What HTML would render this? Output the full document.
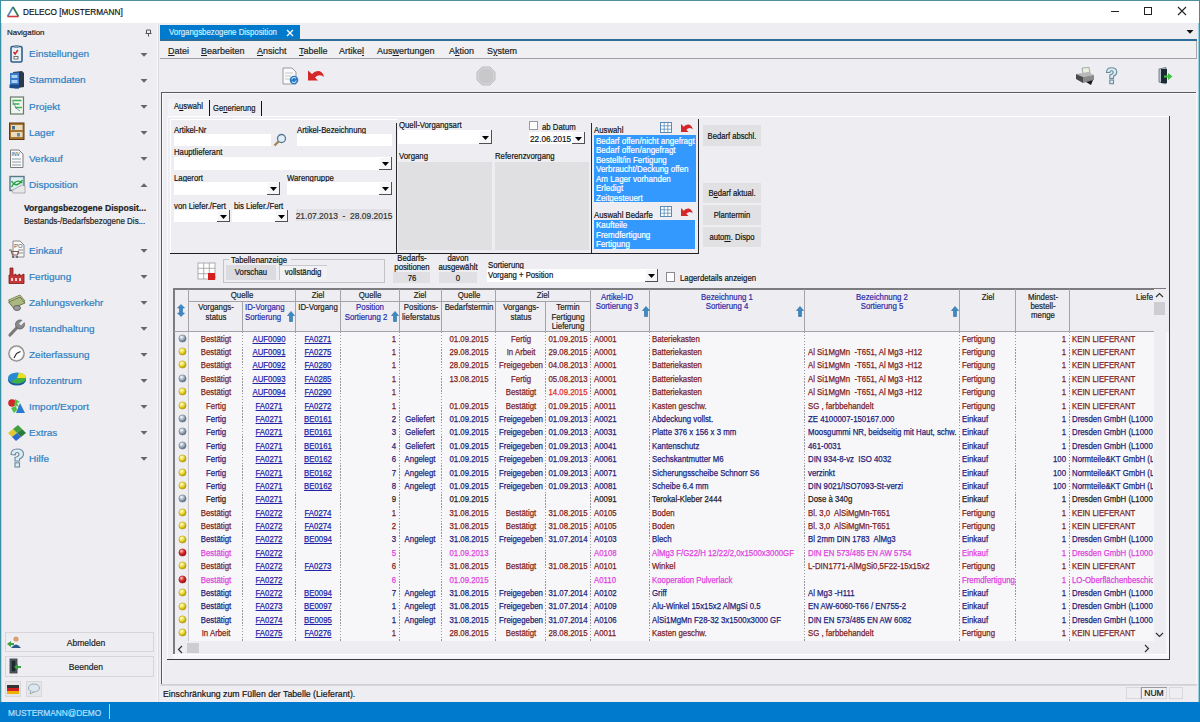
<!DOCTYPE html>
<html><head><meta charset="utf-8"><title>DELECO</title>
<style>
html,body{margin:0;padding:0;}
body{width:1200px;height:722px;overflow:hidden;background:#eeeef2;position:relative;font-family:"Liberation Sans", sans-serif;}
.a{position:absolute;}
.t{position:absolute;white-space:pre;font-family:"Liberation Sans", sans-serif;-webkit-text-stroke:0.2px currentColor;}
u{text-decoration:underline;}
</style></head><body>
<svg width="0" height="0" style="position:absolute"><defs>
<radialGradient id="gg" cx="35%" cy="30%" r="70%"><stop offset="0" stop-color="#ffffff"/><stop offset="0.5" stop-color="#a8b8c8"/><stop offset="1" stop-color="#58687a"/></radialGradient>
<radialGradient id="gy" cx="35%" cy="30%" r="70%"><stop offset="0" stop-color="#ffffe0"/><stop offset="0.5" stop-color="#f0e040"/><stop offset="1" stop-color="#b09800"/></radialGradient>
<radialGradient id="gr" cx="35%" cy="30%" r="70%"><stop offset="0" stop-color="#ffd0d0"/><stop offset="0.5" stop-color="#e03030"/><stop offset="1" stop-color="#901010"/></radialGradient>
</defs></svg>
<div class="a" style="left:0px;top:0px;width:1200px;height:23px;background:#ffffff"></div>
<div class="a" style="left:0px;top:0px;width:1200px;height:1px;background:#4f8e9e"></div>
<div class="a" style="left:0px;top:0px;width:1px;height:722px;background:#3a90a6"></div>
<div class="a" style="left:1199px;top:0px;width:1px;height:722px;background:#3a90a6"></div>
<div class="a" style="left:1198px;top:23px;width:1px;height:679px;background:#9ad0e0"></div>
<div class="a" style="left:1px;top:23px;width:1px;height:679px;background:#a8dcea"></div>
<svg class="a" style="left:6px;top:6px" width="14" height="12" viewBox="0 0 14 12"><path d="M7 1 L1.5 10.5" stroke="#4a8ab8" stroke-width="1.6" fill="none"/><path d="M7 1 L12.5 10.5" stroke="#2a7a4a" stroke-width="1.6" fill="none"/><path d="M1.5 10.5 L12.5 10.5" stroke="#d03a3a" stroke-width="1.6" fill="none"/></svg>
<div class="t" style="top:7.20px;font-size:9.8px;line-height:9.8px;color:#111;left:23px;transform:scaleX(0.84);transform-origin:left 50%;">DELECO [MUSTERMANN]</div>
<div class="a" style="left:1111px;top:11px;width:8px;height:1px;background:#222"></div>
<div class="a" style="left:1144px;top:7px;width:8px;height:8px;border:1px solid #222;box-sizing:border-box;"></div>
<svg class="a" style="left:1177px;top:6px" width="10" height="10" viewBox="0 0 10 10"><path d="M1 1 L9 9 M9 1 L1 9" stroke="#222" stroke-width="1.1"/></svg>
<div class="t" style="top:29.14px;font-size:8.1px;line-height:8.1px;color:#222;left:7px;transform:scaleX(0.98);transform-origin:left 50%;">Navigation</div>
<svg class="a" style="left:145px;top:29px" width="7" height="8" viewBox="0 0 7 8"><path d="M1.5 1h4v3.5h-4z M0.5 4.5h6 M3.5 4.5v3" stroke="#555" stroke-width="1" fill="none"/></svg>
<div class="a" style="left:157px;top:23px;width:1px;height:679px;background:#f8f8fa"></div>
<div class="a" style="left:158px;top:23px;width:1px;height:679px;background:#dcdce0"></div>
<svg class="a" style="left:7px;top:44px" width="20" height="20" viewBox="0 0 20 20"><rect x="4" y="2.5" width="11" height="15.5" rx="1.5" fill="#e8f0f6" stroke="#2c5f88" stroke-width="1.6"/><rect x="7" y="1" width="5" height="3" rx="1" fill="#7a98b0"/><path d="M6.5 8 l1.6 2 l2.8-4" stroke="#d02020" stroke-width="1.4" fill="none"/><rect x="7" y="12.5" width="4" height="2.5" fill="#fff" stroke="#555" stroke-width="0.8"/></svg>
<div class="t" style="top:49.40px;font-size:9.8px;line-height:9.8px;color:#2f80c2;left:29.3px;transform:scaleX(1.02);transform-origin:left 50%;">Einstellungen</div>
<svg class="a" style="left:140px;top:52.7px" width="8" height="4" viewBox="0 0 8 4"><path d="M0.5 0h7L4 3.8z" fill="#666"/></svg>
<svg class="a" style="left:7px;top:70px" width="20" height="20" viewBox="0 0 20 20"><path d="M6 2 L15 1 L17 3 V17 L8 18.5z" fill="#2a3a4a"/><path d="M3 3 L12 2.5 V18.5 L3 18z" fill="#3a7ac8"/><rect x="4.5" y="5" width="6" height="3" fill="#a8d0f0"/><rect x="4.5" y="10" width="6" height="3" fill="#a8d0f0"/><path d="M2.5 14.5 L12 14.5 L12 18.5 L2.5 18z" fill="#1a4a88"/></svg>
<div class="t" style="top:75.48px;font-size:9.8px;line-height:9.8px;color:#2f80c2;left:29.3px;transform:scaleX(1.02);transform-origin:left 50%;">Stammdaten</div>
<svg class="a" style="left:140px;top:78.78px" width="8" height="4" viewBox="0 0 8 4"><path d="M0.5 0h7L4 3.8z" fill="#666"/></svg>
<svg class="a" style="left:7px;top:96px" width="20" height="20" viewBox="0 0 20 20"><rect x="3.5" y="1" width="13" height="17" fill="#f0f6f0" stroke="#6a7a6a" stroke-width="1.2"/><path d="M5.5 4.5h9 M5.5 8h7 M8 11.5h7" stroke="#40b050" stroke-width="1.6"/><path d="M5.5 5 L9 12 L13 15" stroke="#5a7a9a" stroke-width="0.8" fill="none"/></svg>
<div class="t" style="top:101.56px;font-size:9.8px;line-height:9.8px;color:#2f80c2;left:29.3px;transform:scaleX(1.02);transform-origin:left 50%;">Projekt</div>
<svg class="a" style="left:140px;top:104.86px" width="8" height="4" viewBox="0 0 8 4"><path d="M0.5 0h7L4 3.8z" fill="#666"/></svg>
<svg class="a" style="left:7px;top:122px" width="20" height="20" viewBox="0 0 20 20"><rect x="2.5" y="1" width="14.5" height="16.5" fill="#a8742e" stroke="#5a3a10" stroke-width="1"/><rect x="4" y="3" width="11.5" height="5" fill="#e8dcc0"/><rect x="4" y="10" width="11.5" height="5" fill="#e8dcc0"/><rect x="5" y="4" width="3" height="3.5" fill="#4a6a8a"/><rect x="10" y="11" width="3" height="3.5" fill="#6a8aaa"/></svg>
<div class="t" style="top:127.64px;font-size:9.8px;line-height:9.8px;color:#2f80c2;left:29.3px;transform:scaleX(1.02);transform-origin:left 50%;">Lager</div>
<svg class="a" style="left:140px;top:130.94px" width="8" height="4" viewBox="0 0 8 4"><path d="M0.5 0h7L4 3.8z" fill="#666"/></svg>
<svg class="a" style="left:7px;top:149px" width="20" height="20" viewBox="0 0 20 20"><path d="M3.5 1 H12 L16 5 V18.5 H3.5z" fill="#fafafa" stroke="#7a7a7a" stroke-width="1"/><text x="4.5" y="7" font-size="5" font-family="Liberation Sans" fill="#333">INV</text><path d="M5 10h9 M5 13h9 M5 16h9" stroke="#8aa0a8" stroke-width="1.2"/></svg>
<div class="t" style="top:153.72px;font-size:9.8px;line-height:9.8px;color:#2f80c2;left:29.3px;transform:scaleX(1.02);transform-origin:left 50%;">Verkauf</div>
<svg class="a" style="left:140px;top:157.01999999999998px" width="8" height="4" viewBox="0 0 8 4"><path d="M0.5 0h7L4 3.8z" fill="#666"/></svg>
<svg class="a" style="left:7px;top:175px" width="20" height="20" viewBox="0 0 20 20"><rect x="3" y="1.5" width="14" height="14" fill="#d8eef2" stroke="#5a7a88" stroke-width="1.4"/><path d="M4.5 12 Q9 3 15.5 8 M4.5 6 Q9 14 15.5 5" stroke="#2aa03a" stroke-width="1.3" fill="none"/><path d="M15 10 L18 11 V18 L6 18 L5 15.5z" fill="#e8e8e8" stroke="#888" stroke-width="0.6"/></svg>
<div class="t" style="top:179.80px;font-size:9.8px;line-height:9.8px;color:#2f80c2;left:29.3px;transform:scaleX(1.02);transform-origin:left 50%;">Disposition</div>
<svg class="a" style="left:140px;top:183.09999999999997px" width="8" height="4" viewBox="0 0 8 4"><path d="M0.5 4h7L4 0.2z" fill="#666"/></svg>
<svg class="a" style="left:7px;top:240px" width="20" height="20" viewBox="0 0 20 20"><path d="M6 1 H13 L17 5 V17 H6z" fill="#f8f8f8" stroke="#8a8a8a" stroke-width="1"/><text x="7" y="8" font-size="6" font-family="Liberation Sans" fill="#555">PO</text><path d="M11 10h5 M11 13h5" stroke="#8a8a8a" stroke-width="1"/><path d="M2 10 h2 l1.5 5 h5 l1-3.5 h-6.5" stroke="#7a5a50" stroke-width="1.2" fill="none"/><circle cx="6" cy="17" r="1" fill="#555"/><circle cx="10" cy="17" r="1" fill="#555"/></svg>
<div class="t" style="top:245.50px;font-size:9.8px;line-height:9.8px;color:#2f80c2;left:29.3px;transform:scaleX(1.02);transform-origin:left 50%;">Einkauf</div>
<svg class="a" style="left:140px;top:248.8px" width="8" height="4" viewBox="0 0 8 4"><path d="M0.5 0h7L4 3.8z" fill="#666"/></svg>
<svg class="a" style="left:7px;top:266px" width="20" height="20" viewBox="0 0 20 20"><path d="M2 9 L2 17.5 L17 17.5 L17 8 L13 10 L13 8 L9 10 L9 8 L6 9.5 L6 2 L3 2 L3 9z" fill="#c83838" stroke="#7a1818" stroke-width="0.8"/><rect x="4" y="12" width="2" height="3" fill="#f8d0d0"/><rect x="8" y="12" width="2" height="3" fill="#f8d0d0"/><rect x="12" y="12" width="2" height="3" fill="#f8d0d0"/></svg>
<div class="t" style="top:271.50px;font-size:9.8px;line-height:9.8px;color:#2f80c2;left:29.3px;transform:scaleX(1.02);transform-origin:left 50%;">Fertigung</div>
<svg class="a" style="left:140px;top:274.8px" width="8" height="4" viewBox="0 0 8 4"><path d="M0.5 0h7L4 3.8z" fill="#666"/></svg>
<svg class="a" style="left:7px;top:292px" width="20" height="20" viewBox="0 0 20 20"><path d="M1.5 8 L13 3 L18 9 L6.5 14z" fill="#c8d0a0" stroke="#6a7040" stroke-width="0.8"/><path d="M1.5 10 L13 5 L18 11 L6.5 16z" fill="#a8b880" stroke="#5a6030" stroke-width="0.8"/><ellipse cx="10" cy="16" rx="3.5" ry="2.5" fill="#9a9a9a" stroke="#555" stroke-width="0.8"/></svg>
<div class="t" style="top:297.50px;font-size:9.8px;line-height:9.8px;color:#2f80c2;left:29.3px;transform:scaleX(1.02);transform-origin:left 50%;">Zahlungsverkehr</div>
<svg class="a" style="left:140px;top:300.8px" width="8" height="4" viewBox="0 0 8 4"><path d="M0.5 0h7L4 3.8z" fill="#666"/></svg>
<svg class="a" style="left:7px;top:318px" width="20" height="20" viewBox="0 0 20 20"><path d="M3 17 L10.5 9" stroke="#7a7a7a" stroke-width="3.2" stroke-linecap="round"/><circle cx="13" cy="6.5" r="4.5" fill="#8a8a8a" stroke="#5a5a5a" stroke-width="0.8"/><path d="M13 6.5 L17 2.5" stroke="#eeeef2" stroke-width="2.5"/></svg>
<div class="t" style="top:323.50px;font-size:9.8px;line-height:9.8px;color:#2f80c2;left:29.3px;transform:scaleX(1.02);transform-origin:left 50%;">Instandhaltung</div>
<svg class="a" style="left:140px;top:326.8px" width="8" height="4" viewBox="0 0 8 4"><path d="M0.5 0h7L4 3.8z" fill="#666"/></svg>
<svg class="a" style="left:7px;top:344px" width="20" height="20" viewBox="0 0 20 20"><circle cx="9.5" cy="9.5" r="8.3" fill="#8a8a8a"/><circle cx="9.5" cy="9.5" r="6.8" fill="#ffffff" stroke="#c8c8c8" stroke-width="0.6"/><path d="M9.5 9.5 L13.5 7.5 M9.5 9.5 L7 14" stroke="#222" stroke-width="1.1"/></svg>
<div class="t" style="top:349.50px;font-size:9.8px;line-height:9.8px;color:#2f80c2;left:29.3px;transform:scaleX(1.02);transform-origin:left 50%;">Zeiterfassung</div>
<svg class="a" style="left:140px;top:352.8px" width="8" height="4" viewBox="0 0 8 4"><path d="M0.5 0h7L4 3.8z" fill="#666"/></svg>
<svg class="a" style="left:7px;top:370px" width="20" height="20" viewBox="0 0 20 20"><ellipse cx="10" cy="10" rx="9" ry="5.5" fill="#1a5a98"/><ellipse cx="10" cy="8" rx="9" ry="5.5" fill="#2a8ad0"/><path d="M10 8 L19 8 A9 5.5 0 0 0 12 2.6z" fill="#e8e020"/><path d="M10 8 L19 8 A9 5.5 0 0 1 4 12z" fill="#40b040"/></svg>
<div class="t" style="top:375.50px;font-size:9.8px;line-height:9.8px;color:#2f80c2;left:29.3px;transform:scaleX(1.02);transform-origin:left 50%;">Infozentrum</div>
<svg class="a" style="left:140px;top:378.8px" width="8" height="4" viewBox="0 0 8 4"><path d="M0.5 0h7L4 3.8z" fill="#666"/></svg>
<svg class="a" style="left:7px;top:396px" width="20" height="20" viewBox="0 0 20 20"><circle cx="5" cy="7" r="3.8" fill="#d02828"/><path d="M8 3 L13 6 L10 7 L12 11 L7 9 L8 6z" fill="#50c040"/><path d="M4 12 L9 10 L10 14 L7 17z" fill="#50c040"/><path d="M13 7 L18 17 L9 17z" fill="#2a7ad0"/></svg>
<div class="t" style="top:401.50px;font-size:9.8px;line-height:9.8px;color:#2f80c2;left:29.3px;transform:scaleX(1.02);transform-origin:left 50%;">Import/Export</div>
<svg class="a" style="left:140px;top:404.8px" width="8" height="4" viewBox="0 0 8 4"><path d="M0.5 0h7L4 3.8z" fill="#666"/></svg>
<svg class="a" style="left:7px;top:422px" width="20" height="20" viewBox="0 0 20 20"><path d="M1 11 L6 7 L10 11 L5 15z" fill="#e0c830"/><path d="M6 7 L11 3 L15 7 L10 11z" fill="#40a040"/><path d="M10 11 L15 7 L19 11 L14 15z" fill="#2a7a3a"/><path d="M5 15 L10 11 L14 15 L9 19z" fill="#2a6ac8"/></svg>
<div class="t" style="top:427.50px;font-size:9.8px;line-height:9.8px;color:#2f80c2;left:29.3px;transform:scaleX(1.02);transform-origin:left 50%;">Extras</div>
<svg class="a" style="left:140px;top:430.8px" width="8" height="4" viewBox="0 0 8 4"><path d="M0.5 0h7L4 3.8z" fill="#666"/></svg>
<svg class="a" style="left:7px;top:448px" width="20" height="20" viewBox="0 0 20 20"><path d="M4 6.5 Q4 1 10 1 Q16.5 1 16.5 6 Q16.5 9.2 12.5 11 L12.5 13 L8 13 L8 9.5 Q12 8.3 12 6.2 Q12 4.5 10 4.5 Q8.3 4.5 8.3 6.8z" fill="#dcecf4" stroke="#6a8a9c" stroke-width="1.1"/><rect x="8" y="14.8" width="4.5" height="4.2" fill="#dcecf4" stroke="#6a8a9c" stroke-width="1.1"/></svg>
<div class="t" style="top:453.50px;font-size:9.8px;line-height:9.8px;color:#2f80c2;left:29.3px;transform:scaleX(1.02);transform-origin:left 50%;">Hilfe</div>
<svg class="a" style="left:140px;top:456.8px" width="8" height="4" viewBox="0 0 8 4"><path d="M0.5 0h7L4 3.8z" fill="#666"/></svg>
<div class="t" style="top:203.51px;font-size:9.2px;line-height:9.2px;color:#222;font-weight:bold;left:24px;transform:scaleX(0.935);transform-origin:left 50%;">Vorgangsbezogene Disposit...</div>
<div class="t" style="top:216.61px;font-size:9.2px;line-height:9.2px;color:#222;left:24px;transform:scaleX(0.87);transform-origin:left 50%;">Bestands-/Bedarfsbezogene Dis...</div>
<div class="a" style="left:5px;top:632px;width:149px;height:20px;background:#eeeef2;border:1px solid #d6d6da;box-sizing:border-box;"></div>
<div class="a" style="left:5px;top:656px;width:149px;height:21px;background:#eeeef2;border:1px solid #d6d6da;box-sizing:border-box;"></div>
<svg class="a" style="left:7px;top:635px" width="14" height="14" viewBox="0 0 14 14"><circle cx="9" cy="4" r="2.6" fill="#d8a070"/><path d="M4 13 Q9 6 14 13z" fill="#2a5a8a"/><path d="M0 9 l4-3 v2 h3 v2 h-3 v2z" fill="#3aa040"/></svg>
<div class="t" style="top:637.96px;font-size:9.5px;line-height:9.5px;color:#222;left:46.00px;width:80px;text-align:center;transform:scaleX(0.9);transform-origin:center 50%;">Abmelden</div>
<svg class="a" style="left:9px;top:658px" width="12" height="16" viewBox="0 0 12 16"><rect x="1" y="1" width="7" height="14" fill="#5a6a7a" stroke="#333" stroke-width="0.8"/><rect x="2.5" y="2.5" width="4" height="11" fill="#1a2a2a"/><path d="M5 9 l4-3 v2 h3 v2 h-3 v2z" fill="#3aa040"/></svg>
<div class="t" style="top:661.96px;font-size:9.5px;line-height:9.5px;color:#222;left:46.00px;width:80px;text-align:center;transform:scaleX(0.9);transform-origin:center 50%;">Beenden</div>
<div class="a" style="left:5px;top:681px;width:16px;height:16px;background:#e6e6ea;border:1px solid #d8d8dc;box-sizing:border-box;"></div>
<svg class="a" style="left:7px;top:685px" width="12" height="9" viewBox="0 0 12 9"><rect x="0" y="0" width="12" height="3" fill="#333"/><rect x="0" y="3" width="12" height="3" fill="#d02020"/><rect x="0" y="6" width="12" height="3" fill="#f0b000"/></svg>
<div class="a" style="left:26px;top:681px;width:16px;height:16px;background:#e6e6ea;border:1px solid #d8d8dc;box-sizing:border-box;"></div>
<svg class="a" style="left:28px;top:683px" width="12" height="11" viewBox="0 0 12 11"><ellipse cx="6" cy="5" rx="5.5" ry="4" fill="#dde8ee" stroke="#8aa0aa" stroke-width="0.8"/><path d="M3 8 L2 11 L6 9" fill="#dde8ee" stroke="#8aa0aa" stroke-width="0.8"/></svg>
<div class="a" style="left:0px;top:702px;width:1200px;height:20px;background:#007acc"></div>
<div class="t" style="top:707.54px;font-size:9.4px;line-height:9.4px;color:#b8e0ff;left:8.4px;transform:scaleX(0.89);transform-origin:left 50%;">MUSTERMANN@DEMO</div>
<div class="a" style="left:109px;top:704px;width:1px;height:15px;background:#a8d4f4"></div>
<div class="a" style="left:160px;top:25px;width:140px;height:15px;background:#007acc"></div>
<div class="t" style="top:27.75px;font-size:8.8px;line-height:8.8px;color:#d4eeff;left:168.5px;transform:scaleX(0.89);transform-origin:left 50%;">Vorgangsbezogene Disposition</div>
<svg class="a" style="left:286px;top:29px" width="8" height="8" viewBox="0 0 8 8"><path d="M1 1L7 7M7 1L1 7" stroke="#ffffff" stroke-width="1.4"/></svg>
<div class="a" style="left:160px;top:39px;width:1037px;height:2px;background:#2c6e98"></div>
<svg class="a" style="left:1186px;top:29.5px" width="8" height="4" viewBox="0 0 8 4"><path d="M0.5 0h7L4 3.8z" fill="#111"/></svg>
<div class="a" style="left:160px;top:41px;width:1037px;height:17px;background:#f0f0f2"></div>
<div class="a" style="left:160px;top:58px;width:1037px;height:1px;background:#a0a0a4"></div>
<div class="a" style="left:1196px;top:41px;width:1px;height:18px;background:#a8a8ac"></div>
<div class="t" style="top:45.82px;font-size:9.9px;line-height:9.9px;color:#222;left:168.3px;transform:scaleX(0.91);transform-origin:left 50%;"><u>D</u>atei</div>
<div class="t" style="top:45.82px;font-size:9.9px;line-height:9.9px;color:#222;left:200.7px;transform:scaleX(0.91);transform-origin:left 50%;"><u>B</u>earbeiten</div>
<div class="t" style="top:45.82px;font-size:9.9px;line-height:9.9px;color:#222;left:256.7px;transform:scaleX(0.91);transform-origin:left 50%;"><u>A</u>nsicht</div>
<div class="t" style="top:45.82px;font-size:9.9px;line-height:9.9px;color:#222;left:299px;transform:scaleX(0.91);transform-origin:left 50%;"><u>T</u>abelle</div>
<div class="t" style="top:45.82px;font-size:9.9px;line-height:9.9px;color:#222;left:339.3px;transform:scaleX(0.91);transform-origin:left 50%;">Artike<u>l</u></div>
<div class="t" style="top:45.82px;font-size:9.9px;line-height:9.9px;color:#222;left:376.7px;transform:scaleX(0.91);transform-origin:left 50%;">Aus<u>w</u>ertungen</div>
<div class="t" style="top:45.82px;font-size:9.9px;line-height:9.9px;color:#222;left:449px;transform:scaleX(0.91);transform-origin:left 50%;">A<u>k</u>tion</div>
<div class="t" style="top:45.82px;font-size:9.9px;line-height:9.9px;color:#222;left:486.7px;transform:scaleX(0.91);transform-origin:left 50%;">S<u>y</u>stem</div>
<svg class="a" style="left:282px;top:67px" width="17" height="18" viewBox="0 0 17 18"><path d="M1 1h9l4 4v12H1z" fill="#fafafa" stroke="#9a9a9a" stroke-width="1"/><path d="M3 6h8 M3 9h6 M3 12h5" stroke="#c8c8c8" stroke-width="1"/><circle cx="12" cy="13" r="4.3" fill="#2a78c0"/><path d="M9.8 12.5a2.3 2.3 0 0 1 4.2-1 M14.2 13.5a2.3 2.3 0 0 1 -4.2 1" stroke="#bfe4ff" stroke-width="1.1" fill="none"/></svg>
<svg class="a" style="left:307px;top:69px" width="18" height="13" viewBox="0 0 18 13"><path d="M1 1.5 L1 11.5 L11 11.5 L8 8.5 Q11 5.5 14.5 6.5 Q16 7 17 8 Q16 3 12 2 Q8 1.5 5 5 z" fill="#d42828"/></svg>
<svg class="a" style="left:476px;top:66px" width="20" height="20" viewBox="0 0 20 20"><path d="M6 1h8l5 5v8l-5 5H6l-5-5V6z" fill="#d4d4d6" stroke="#bdbdc0" stroke-width="1"/><path d="M6 3h8l3 3v8l-3 3H6l-3-3V6z" fill="#c8c8ca"/></svg>
<svg class="a" style="left:1075px;top:67px" width="20" height="19" viewBox="0 0 20 19"><path d="M7 1 L14 0.5 L15 6 L8 7z" fill="#e8f0e0" stroke="#7a7a7a" stroke-width="0.6"/><path d="M1 7 L13 5 L19 8 L8 10z" fill="#b8b8b8"/><path d="M1 7 L8 10 L8 16 L1 12z" fill="#4a4a4a"/><path d="M8 10 L19 8 L19 13 L8 16z" fill="#8a8a8a"/><path d="M11 15 L18 13 L16 18z" fill="#1a1a1a"/></svg>
<svg class="a" style="left:1104px;top:67px" width="15" height="18" viewBox="0 0 15 18"><path d="M2.5 5.5 Q2.5 0.8 7.5 0.8 Q12.8 0.8 12.8 5 Q12.8 7.8 9.5 9.3 L9.5 11.5 L5.8 11.5 L5.8 8 Q9.2 7 9.2 5.2 Q9.2 3.8 7.5 3.8 Q6 3.8 6 5.5z" fill="#d8ecf4" stroke="#6a8a9a" stroke-width="1.1"/><rect x="5.8" y="13" width="3.7" height="3.7" fill="#d8ecf4" stroke="#6a8a9a" stroke-width="1.1"/></svg>
<svg class="a" style="left:1158px;top:67px" width="16" height="18" viewBox="0 0 16 18"><path d="M1 2 L8 0.5 V17 L1 15z" fill="#bfc8d0" stroke="#5a6a7a" stroke-width="0.8"/><rect x="3" y="2" width="6" height="14" fill="#1a2a30"/><path d="M6 8.5 h4 v-2.5 l4.5 3.5 l-4.5 3.5 v-2.5 h-4z" fill="#40c040"/></svg>
<div class="a" style="left:161px;top:92px;width:1036px;height:1px;background:#5a5a5e"></div>
<div class="a" style="left:161px;top:92px;width:1px;height:592px;background:#5a5a5e"></div>
<div class="a" style="left:162px;top:93px;width:1034px;height:1px;background:#fafafc"></div>
<div class="a" style="left:162px;top:93px;width:1px;height:590px;background:#fafafc"></div>
<div class="a" style="left:1196px;top:92px;width:1px;height:593px;background:#fafafc"></div>
<div class="a" style="left:161px;top:684px;width:1036px;height:1px;background:#d0d0d4"></div>
<div class="a" style="left:168px;top:99px;width:41px;height:19px;background:#f2f2f5"></div>
<div class="a" style="left:167px;top:116px;width:1003px;height:1px;background:#ffffff"></div>
<div class="a" style="left:167px;top:116px;width:1px;height:543px;background:#f8f8fa"></div>
<div class="a" style="left:1169px;top:116px;width:1px;height:543px;background:#3c3c40"></div>
<div class="a" style="left:167px;top:659px;width:1003px;height:1px;background:#3c3c40"></div>
<div class="t" style="top:101.81px;font-size:9.2px;line-height:9.2px;color:#111;left:173.5px;transform:scaleX(0.83);transform-origin:left 50%;">A<u>u</u>swahl</div>
<div class="a" style="left:209px;top:100px;width:1.4px;height:16px;background:#111"></div>
<div class="t" style="top:103.51px;font-size:9.2px;line-height:9.2px;color:#111;left:213px;transform:scaleX(0.83);transform-origin:left 50%;">Ge<u>n</u>erierung</div>
<div class="a" style="left:261px;top:101px;width:1.4px;height:15px;background:#111"></div>
<div class="a" style="left:170px;top:119px;width:227px;height:1px;background:#ffffff"></div>
<div class="a" style="left:170px;top:119px;width:1px;height:134px;background:#ffffff"></div>
<div class="a" style="left:170px;top:253px;width:529px;height:1px;background:#1e1e22"></div>
<div class="a" style="left:396px;top:123px;width:1px;height:130px;background:#2a2a2e"></div>
<div class="a" style="left:591px;top:123px;width:1px;height:130px;background:#2a2a2e"></div>
<div class="a" style="left:698px;top:119px;width:1px;height:135px;background:#2a2a2e"></div>
<div class="t" style="top:125.37px;font-size:9.6px;line-height:9.6px;color:#111;left:174px;transform:scaleX(0.81);transform-origin:left 50%;">Artikel-Nr</div>
<div class="a" style="left:174px;top:134px;width:97px;height:12px;background:#ffffff"></div>
<svg class="a" style="left:273px;top:133px" width="14" height="14" viewBox="0 0 14 14"><circle cx="8.5" cy="5.5" r="4" fill="#dfeff8" stroke="#5a7a90" stroke-width="1.3"/><path d="M5.5 8.5 L1.5 12.5" stroke="#a08040" stroke-width="2.2"/></svg>
<div class="t" style="top:125.37px;font-size:9.6px;line-height:9.6px;color:#111;left:297px;transform:scaleX(0.81);transform-origin:left 50%;">Artikel-Bezeichnung</div>
<div class="a" style="left:297px;top:134px;width:95px;height:12px;background:#ffffff"></div>
<div class="t" style="top:147.37px;font-size:9.6px;line-height:9.6px;color:#111;left:174px;transform:scaleX(0.81);transform-origin:left 50%;">Hauptlieferant</div>
<div class="a" style="left:174px;top:157px;width:218px;height:13px;background:#ffffff"></div>
<div class="a" style="left:379px;top:157px;width:13px;height:13px;background:#f6f6f8"></div>
<div class="a" style="left:379px;top:157px;width:13px;height:1px;background:#ffffff"></div>
<div class="a" style="left:379px;top:157px;width:1px;height:13px;background:#ffffff"></div>
<div class="a" style="left:379px;top:169px;width:13px;height:1px;background:#505054"></div>
<div class="a" style="left:391px;top:157px;width:1px;height:13px;background:#505054"></div>
<svg class="a" style="left:382px;top:162.0px" width="7" height="4" viewBox="0 0 7 4"><path d="M0 0h7L3.5 4z" fill="#000"/></svg>
<div class="t" style="top:173.17px;font-size:9.6px;line-height:9.6px;color:#111;left:174px;transform:scaleX(0.81);transform-origin:left 50%;">Lagerort</div>
<div class="a" style="left:174px;top:182px;width:106px;height:13px;background:#ffffff"></div>
<div class="a" style="left:267px;top:182px;width:13px;height:13px;background:#f6f6f8"></div>
<div class="a" style="left:267px;top:182px;width:13px;height:1px;background:#ffffff"></div>
<div class="a" style="left:267px;top:182px;width:1px;height:13px;background:#ffffff"></div>
<div class="a" style="left:267px;top:194px;width:13px;height:1px;background:#505054"></div>
<div class="a" style="left:279px;top:182px;width:1px;height:13px;background:#505054"></div>
<svg class="a" style="left:270px;top:187.0px" width="7" height="4" viewBox="0 0 7 4"><path d="M0 0h7L3.5 4z" fill="#000"/></svg>
<div class="t" style="top:173.17px;font-size:9.6px;line-height:9.6px;color:#111;left:287px;transform:scaleX(0.81);transform-origin:left 50%;">Warengruppe</div>
<div class="a" style="left:287px;top:182px;width:105px;height:13px;background:#ffffff"></div>
<div class="a" style="left:379px;top:182px;width:13px;height:13px;background:#f6f6f8"></div>
<div class="a" style="left:379px;top:182px;width:13px;height:1px;background:#ffffff"></div>
<div class="a" style="left:379px;top:182px;width:1px;height:13px;background:#ffffff"></div>
<div class="a" style="left:379px;top:194px;width:13px;height:1px;background:#505054"></div>
<div class="a" style="left:391px;top:182px;width:1px;height:13px;background:#505054"></div>
<svg class="a" style="left:382px;top:187.0px" width="7" height="4" viewBox="0 0 7 4"><path d="M0 0h7L3.5 4z" fill="#000"/></svg>
<div class="t" style="top:201.07px;font-size:9.6px;line-height:9.6px;color:#111;left:174px;transform:scaleX(0.81);transform-origin:left 50%;">von Liefer./Fert</div>
<div class="a" style="left:174px;top:210px;width:56px;height:12px;background:#ffffff"></div>
<div class="a" style="left:217px;top:210px;width:13px;height:12px;background:#f6f6f8"></div>
<div class="a" style="left:217px;top:210px;width:13px;height:1px;background:#ffffff"></div>
<div class="a" style="left:217px;top:210px;width:1px;height:12px;background:#ffffff"></div>
<div class="a" style="left:217px;top:221px;width:13px;height:1px;background:#505054"></div>
<div class="a" style="left:229px;top:210px;width:1px;height:12px;background:#505054"></div>
<svg class="a" style="left:220px;top:214.5px" width="7" height="4" viewBox="0 0 7 4"><path d="M0 0h7L3.5 4z" fill="#000"/></svg>
<div class="t" style="top:201.07px;font-size:9.6px;line-height:9.6px;color:#111;left:234px;transform:scaleX(0.81);transform-origin:left 50%;">bis Liefer./Fert</div>
<div class="a" style="left:232px;top:210px;width:56px;height:12px;background:#ffffff"></div>
<div class="a" style="left:275px;top:210px;width:13px;height:12px;background:#f6f6f8"></div>
<div class="a" style="left:275px;top:210px;width:13px;height:1px;background:#ffffff"></div>
<div class="a" style="left:275px;top:210px;width:1px;height:12px;background:#ffffff"></div>
<div class="a" style="left:275px;top:221px;width:13px;height:1px;background:#505054"></div>
<div class="a" style="left:287px;top:210px;width:1px;height:12px;background:#505054"></div>
<svg class="a" style="left:278px;top:214.5px" width="7" height="4" viewBox="0 0 7 4"><path d="M0 0h7L3.5 4z" fill="#000"/></svg>
<div class="a" style="left:296px;top:209px;width:95px;height:12px;background:#e2e2e6"></div>
<div class="t" style="top:210.87px;font-size:9.6px;line-height:9.6px;color:#333;left:283.50px;width:120px;text-align:center;transform:scaleX(0.88);transform-origin:center 50%;">21.07.2013  -  28.09.2015</div>
<div class="t" style="top:120.27px;font-size:9.6px;line-height:9.6px;color:#111;left:398.5px;transform:scaleX(0.81);transform-origin:left 50%;">Quell-Vorgangsart</div>
<div class="a" style="left:398px;top:130px;width:94px;height:14px;background:#ffffff"></div>
<div class="a" style="left:479px;top:130px;width:13px;height:14px;background:#f6f6f8"></div>
<div class="a" style="left:479px;top:130px;width:13px;height:1px;background:#ffffff"></div>
<div class="a" style="left:479px;top:130px;width:1px;height:14px;background:#ffffff"></div>
<div class="a" style="left:479px;top:143px;width:13px;height:1px;background:#505054"></div>
<div class="a" style="left:491px;top:130px;width:1px;height:14px;background:#505054"></div>
<svg class="a" style="left:482px;top:135.5px" width="7" height="4" viewBox="0 0 7 4"><path d="M0 0h7L3.5 4z" fill="#000"/></svg>
<div class="a" style="left:529px;top:121px;width:9px;height:9px;background:#ffffff;border:1px solid #9a9a9e;box-sizing:border-box;"></div>
<div class="t" style="top:122.17px;font-size:9.6px;line-height:9.6px;color:#111;left:542px;transform:scaleX(0.81);transform-origin:left 50%;">ab Datum</div>
<div class="a" style="left:529px;top:132px;width:56px;height:12px;background:#ffffff"></div>
<div class="a" style="left:572px;top:132px;width:13px;height:12px;background:#f6f6f8"></div>
<div class="a" style="left:572px;top:132px;width:13px;height:1px;background:#ffffff"></div>
<div class="a" style="left:572px;top:132px;width:1px;height:12px;background:#ffffff"></div>
<div class="a" style="left:572px;top:143px;width:13px;height:1px;background:#505054"></div>
<div class="a" style="left:584px;top:132px;width:1px;height:12px;background:#505054"></div>
<svg class="a" style="left:575px;top:136.5px" width="7" height="4" viewBox="0 0 7 4"><path d="M0 0h7L3.5 4z" fill="#000"/></svg>
<div class="t" style="top:133.70px;font-size:9.8px;line-height:9.8px;color:#111;left:529.5px;transform:scaleX(0.84);transform-origin:left 50%;">22.06.2015</div>
<div class="a" style="left:398px;top:162px;width:94px;height:88px;background:#e0e0e2"></div>
<div class="t" style="top:150.77px;font-size:9.6px;line-height:9.6px;color:#111;left:398.5px;transform:scaleX(0.81);transform-origin:left 50%;">Vorgang</div>
<div class="a" style="left:495px;top:162px;width:94px;height:88px;background:#e0e0e2"></div>
<div class="t" style="top:150.77px;font-size:9.6px;line-height:9.6px;color:#111;left:495px;transform:scaleX(0.81);transform-origin:left 50%;">Referenzvorgang</div>
<div class="t" style="top:124.57px;font-size:9.6px;line-height:9.6px;color:#111;left:594px;transform:scaleX(0.81);transform-origin:left 50%;">Auswahl</div>
<svg class="a" style="left:660px;top:122px" width="12" height="11" viewBox="0 0 12 11"><rect x="0.5" y="0.5" width="11" height="10" fill="#ffffff" stroke="#5a8ab8" stroke-width="1"/><path d="M4.2 0.5v10 M7.8 0.5v10 M0.5 3.8h11 M0.5 7.2h11" stroke="#5a8ab8" stroke-width="0.8"/></svg>
<svg class="a" style="left:680px;top:123px" width="13" height="10" viewBox="0 0 13 10"><path d="M1 1 L1 9 L8.5 9 L6.3 6.8 Q8.5 4.5 11 5.3 Q12 5.7 12.7 6.5 Q12 2.5 9 1.6 Q6 1.2 3.8 3.8 z" fill="#d42828"/></svg>
<div class="a" style="left:594px;top:135px;width:102px;height:67px;background:#3399ff"></div>
<div class="t" style="top:136.58px;font-size:9.0px;line-height:9.0px;color:#ffffff;left:595.5px;transform:scaleX(0.89);transform-origin:left 50%;">Bedarf offen/nicht angefragt</div>
<div class="t" style="top:146.13px;font-size:9.0px;line-height:9.0px;color:#ffffff;left:595.5px;transform:scaleX(0.89);transform-origin:left 50%;">Bedarf offen/angefragt</div>
<div class="t" style="top:155.68px;font-size:9.0px;line-height:9.0px;color:#ffffff;left:595.5px;transform:scaleX(0.89);transform-origin:left 50%;">Bestellt/in Fertigung</div>
<div class="t" style="top:165.23px;font-size:9.0px;line-height:9.0px;color:#ffffff;left:595.5px;transform:scaleX(0.89);transform-origin:left 50%;">Verbraucht/Deckung offen</div>
<div class="t" style="top:174.78px;font-size:9.0px;line-height:9.0px;color:#ffffff;left:595.5px;transform:scaleX(0.89);transform-origin:left 50%;">Am Lager vorhanden</div>
<div class="t" style="top:184.33px;font-size:9.0px;line-height:9.0px;color:#ffffff;left:595.5px;transform:scaleX(0.89);transform-origin:left 50%;">Erledigt</div>
<div class="t" style="top:193.88px;font-size:9.0px;line-height:9.0px;color:#ffffff;left:595.5px;transform:scaleX(0.89);transform-origin:left 50%;">Zeitgesteuert</div>
<div class="t" style="top:209.97px;font-size:9.6px;line-height:9.6px;color:#111;left:594px;transform:scaleX(0.81);transform-origin:left 50%;">Auswahl Bedarfe</div>
<svg class="a" style="left:660px;top:206px" width="12" height="11" viewBox="0 0 12 11"><rect x="0.5" y="0.5" width="11" height="10" fill="#ffffff" stroke="#5a8ab8" stroke-width="1"/><path d="M4.2 0.5v10 M7.8 0.5v10 M0.5 3.8h11 M0.5 7.2h11" stroke="#5a8ab8" stroke-width="0.8"/></svg>
<svg class="a" style="left:680px;top:207px" width="13" height="10" viewBox="0 0 13 10"><path d="M1 1 L1 9 L8.5 9 L6.3 6.8 Q8.5 4.5 11 5.3 Q12 5.7 12.7 6.5 Q12 2.5 9 1.6 Q6 1.2 3.8 3.8 z" fill="#d42828"/></svg>
<div class="a" style="left:594px;top:220px;width:101px;height:29px;background:#3399ff"></div>
<div class="t" style="top:221.08px;font-size:9.0px;line-height:9.0px;color:#ffffff;left:595.5px;transform:scaleX(0.89);transform-origin:left 50%;">Kaufteile</div>
<div class="t" style="top:230.63px;font-size:9.0px;line-height:9.0px;color:#ffffff;left:595.5px;transform:scaleX(0.89);transform-origin:left 50%;">Fremdfertigung</div>
<div class="t" style="top:240.18px;font-size:9.0px;line-height:9.0px;color:#ffffff;left:595.5px;transform:scaleX(0.89);transform-origin:left 50%;">Fertigung</div>
<div class="a" style="left:703px;top:125px;width:58px;height:21px;background:#e1e1e4"></div>
<div class="t" style="top:131.52px;font-size:8.6px;line-height:8.6px;color:#111;left:692.00px;width:80px;text-align:center;transform:scaleX(0.89);transform-origin:center 50%;">Bedarf abschl.</div>
<div class="a" style="left:703px;top:183px;width:58px;height:20px;background:#e1e1e4"></div>
<div class="t" style="top:189.02px;font-size:8.6px;line-height:8.6px;color:#111;left:692.00px;width:80px;text-align:center;transform:scaleX(0.89);transform-origin:center 50%;">B<u>e</u>darf aktual.</div>
<div class="a" style="left:703px;top:205px;width:58px;height:20px;background:#e1e1e4"></div>
<div class="t" style="top:211.02px;font-size:8.6px;line-height:8.6px;color:#111;left:692.00px;width:80px;text-align:center;transform:scaleX(0.89);transform-origin:center 50%;">Plantermin</div>
<div class="a" style="left:703px;top:227px;width:58px;height:20px;background:#e1e1e4"></div>
<div class="t" style="top:233.02px;font-size:8.6px;line-height:8.6px;color:#111;left:692.00px;width:80px;text-align:center;transform:scaleX(0.89);transform-origin:center 50%;">auto<u>m</u>. Dispo</div>
<svg class="a" style="left:197px;top:262px" width="20" height="19" viewBox="0 0 20 19"><g stroke="#9a9aa0" stroke-width="0.8" fill="#ffffff"><rect x="1" y="1" width="17" height="16"/></g><path d="M6.7 1v16 M12.3 1v16 M1 6.3h17 M1 11.7h17" stroke="#9a9aa0" stroke-width="0.8"/><rect x="11" y="11" width="7" height="7" fill="#d42020"/><path d="M15 13 l4 2 l-4 2z" fill="#d42020"/></svg>
<div class="a" style="left:223px;top:259px;width:162px;height:24px;border:1px solid #c4c4c8;box-sizing:border-box;"></div>
<div class="a" style="left:229px;top:255px;width:62px;height:8px;background:#eeeef2"></div>
<div class="t" style="top:255.17px;font-size:9.6px;line-height:9.6px;color:#111;left:231px;transform:scaleX(0.81);transform-origin:left 50%;">Tabellenanzeige</div>
<div class="a" style="left:226px;top:265px;width:50px;height:15px;background:#dcdce0"></div>
<div class="t" style="top:267.88px;font-size:9.0px;line-height:9.0px;color:#111;left:221.00px;width:60px;text-align:center;transform:scaleX(0.86);transform-origin:center 50%;">Vorschau</div>
<div class="a" style="left:279px;top:265px;width:48px;height:15px;background:#f2f2f4"></div>
<div class="a" style="left:279px;top:265px;width:48px;height:1px;background:#c8c8cc"></div>
<div class="a" style="left:279px;top:265px;width:1px;height:15px;background:#c8c8cc"></div>
<div class="t" style="top:268.38px;font-size:9.0px;line-height:9.0px;color:#111;left:273.00px;width:60px;text-align:center;transform:scaleX(0.86);transform-origin:center 50%;">vollständig</div>
<div class="t" style="top:254.38px;font-size:9.0px;line-height:9.0px;color:#111;left:381.50px;width:60px;text-align:center;transform:scaleX(0.86);transform-origin:center 50%;">Bedarfs-</div>
<div class="t" style="top:262.58px;font-size:9.0px;line-height:9.0px;color:#111;left:381.50px;width:60px;text-align:center;transform:scaleX(0.86);transform-origin:center 50%;">positionen</div>
<div class="a" style="left:393px;top:272px;width:37px;height:11px;background:#e0e0e4"></div>
<div class="t" style="top:273.68px;font-size:9.0px;line-height:9.0px;color:#111;left:391.50px;width:40px;text-align:center;transform:scaleX(0.86);transform-origin:center 50%;">76</div>
<div class="t" style="top:254.38px;font-size:9.0px;line-height:9.0px;color:#111;left:427.50px;width:60px;text-align:center;transform:scaleX(0.86);transform-origin:center 50%;">davon</div>
<div class="t" style="top:262.58px;font-size:9.0px;line-height:9.0px;color:#111;left:427.50px;width:60px;text-align:center;transform:scaleX(0.86);transform-origin:center 50%;">ausgewählt</div>
<div class="a" style="left:439px;top:272px;width:38px;height:11px;background:#e0e0e4"></div>
<div class="t" style="top:273.68px;font-size:9.0px;line-height:9.0px;color:#111;left:437.50px;width:40px;text-align:center;transform:scaleX(0.86);transform-origin:center 50%;">0</div>
<div class="t" style="top:259.67px;font-size:9.6px;line-height:9.6px;color:#111;left:487.5px;transform:scaleX(0.81);transform-origin:left 50%;">Sortierung</div>
<div class="a" style="left:487px;top:269px;width:171px;height:13px;background:#ffffff"></div>
<div class="a" style="left:645px;top:269px;width:13px;height:13px;background:#f6f6f8"></div>
<div class="a" style="left:645px;top:269px;width:13px;height:1px;background:#ffffff"></div>
<div class="a" style="left:645px;top:269px;width:1px;height:13px;background:#ffffff"></div>
<div class="a" style="left:645px;top:281px;width:13px;height:1px;background:#505054"></div>
<div class="a" style="left:657px;top:269px;width:1px;height:13px;background:#505054"></div>
<svg class="a" style="left:648px;top:274.0px" width="7" height="4" viewBox="0 0 7 4"><path d="M0 0h7L3.5 4z" fill="#000"/></svg>
<div class="t" style="top:271.38px;font-size:9.0px;line-height:9.0px;color:#111;left:488px;transform:scaleX(0.86);transform-origin:left 50%;">Vorgang + Position</div>
<div class="a" style="left:666px;top:272px;width:9px;height:10px;background:#ffffff;border:1px solid #8a8a8e;box-sizing:border-box;"></div>
<div class="t" style="top:273.17px;font-size:9.6px;line-height:9.6px;color:#111;left:679.5px;transform:scaleX(0.81);transform-origin:left 50%;">Lagerdetails anzeigen</div>
<div class="a" style="left:173px;top:288px;width:996px;height:371px;background:#f7f7f9"></div>
<div class="a" style="left:173px;top:288px;width:996px;height:44px;background:#eeeef2"></div>
<div class="a" style="left:173px;top:288px;width:16px;height:366px;background:#eeeef2"></div>
<div class="a" style="left:173px;top:288px;width:993px;height:1.5px;background:#7c7c80"></div>
<div class="a" style="left:173px;top:288px;width:1.5px;height:366px;background:#7c7c80"></div>
<div class="a" style="left:1154px;top:289px;width:12px;height:365px;background:#eeeef2"></div>
<div class="a" style="left:189px;top:641px;width:965px;height:13px;background:#eeeef2"></div>
<div class="a" style="left:1154px;top:302px;width:11px;height:13px;background:#cdcdd2"></div>
<div class="a" style="left:187px;top:643px;width:12px;height:10px;background:#cdcdd2"></div>
<div class="a" style="left:173px;top:654px;width:996px;height:1px;background:#ffffff"></div>
<svg class="a" style="left:1155px;top:292px" width="9" height="6" viewBox="0 0 9 6"><path d="M1 5 L4.5 1.5 L8 5" stroke="#333" stroke-width="1.2" fill="none"/></svg>
<svg class="a" style="left:1155px;top:632px" width="9" height="6" viewBox="0 0 9 6"><path d="M1 1 L4.5 4.5 L8 1" stroke="#333" stroke-width="1.2" fill="none"/></svg>
<svg class="a" style="left:177px;top:645px" width="6" height="9" viewBox="0 0 6 9"><path d="M5 1 L1.5 4.5 L5 8" stroke="#333" stroke-width="1.2" fill="none"/></svg>
<svg class="a" style="left:1144px;top:644px" width="6" height="9" viewBox="0 0 6 9"><path d="M1 1 L4.5 4.5 L1 8" stroke="#333" stroke-width="1.2" fill="none"/></svg>
<div class="a" style="left:173.5px;top:331px;width:980px;height:1px;background:#a4a4a8"></div>
<div class="a" style="left:188px;top:289px;width:1px;height:42px;background:#a4a4a8"></div>
<div class="a" style="left:242px;top:301px;width:1px;height:30px;background:#a4a4a8"></div>
<div class="a" style="left:295px;top:289px;width:1px;height:42px;background:#a4a4a8"></div>
<div class="a" style="left:340px;top:289px;width:1px;height:42px;background:#a4a4a8"></div>
<div class="a" style="left:399px;top:289px;width:1px;height:42px;background:#a4a4a8"></div>
<div class="a" style="left:441px;top:289px;width:1px;height:42px;background:#a4a4a8"></div>
<div class="a" style="left:495px;top:289px;width:1px;height:42px;background:#a4a4a8"></div>
<div class="a" style="left:545px;top:301px;width:1px;height:30px;background:#a4a4a8"></div>
<div class="a" style="left:590px;top:289px;width:1px;height:42px;background:#a4a4a8"></div>
<div class="a" style="left:649px;top:289px;width:1px;height:42px;background:#a4a4a8"></div>
<div class="a" style="left:804px;top:289px;width:1px;height:42px;background:#a4a4a8"></div>
<div class="a" style="left:959px;top:289px;width:1px;height:42px;background:#a4a4a8"></div>
<div class="a" style="left:1015px;top:289px;width:1px;height:42px;background:#a4a4a8"></div>
<div class="a" style="left:1069px;top:289px;width:1px;height:42px;background:#a4a4a8"></div>
<div class="a" style="left:188.5px;top:301px;width:401.7px;height:1px;background:#a4a4a8"></div>
<div class="a" style="left:242px;top:332px;width:1px;height:309px;background:repeating-linear-gradient(to bottom,#98989c 0,#98989c 1.5px,transparent 1.5px,transparent 2.9px)"></div>
<div class="a" style="left:295px;top:332px;width:1px;height:309px;background:repeating-linear-gradient(to bottom,#98989c 0,#98989c 1.5px,transparent 1.5px,transparent 2.9px)"></div>
<div class="a" style="left:340px;top:332px;width:1px;height:309px;background:repeating-linear-gradient(to bottom,#98989c 0,#98989c 1.5px,transparent 1.5px,transparent 2.9px)"></div>
<div class="a" style="left:399px;top:332px;width:1px;height:309px;background:repeating-linear-gradient(to bottom,#98989c 0,#98989c 1.5px,transparent 1.5px,transparent 2.9px)"></div>
<div class="a" style="left:441px;top:332px;width:1px;height:309px;background:repeating-linear-gradient(to bottom,#98989c 0,#98989c 1.5px,transparent 1.5px,transparent 2.9px)"></div>
<div class="a" style="left:495px;top:332px;width:1px;height:309px;background:repeating-linear-gradient(to bottom,#98989c 0,#98989c 1.5px,transparent 1.5px,transparent 2.9px)"></div>
<div class="a" style="left:545px;top:332px;width:1px;height:309px;background:repeating-linear-gradient(to bottom,#98989c 0,#98989c 1.5px,transparent 1.5px,transparent 2.9px)"></div>
<div class="a" style="left:590px;top:332px;width:1px;height:309px;background:repeating-linear-gradient(to bottom,#98989c 0,#98989c 1.5px,transparent 1.5px,transparent 2.9px)"></div>
<div class="a" style="left:649px;top:332px;width:1px;height:309px;background:repeating-linear-gradient(to bottom,#98989c 0,#98989c 1.5px,transparent 1.5px,transparent 2.9px)"></div>
<div class="a" style="left:804px;top:332px;width:1px;height:309px;background:repeating-linear-gradient(to bottom,#98989c 0,#98989c 1.5px,transparent 1.5px,transparent 2.9px)"></div>
<div class="a" style="left:959px;top:332px;width:1px;height:309px;background:repeating-linear-gradient(to bottom,#98989c 0,#98989c 1.5px,transparent 1.5px,transparent 2.9px)"></div>
<div class="a" style="left:1015px;top:332px;width:1px;height:309px;background:repeating-linear-gradient(to bottom,#98989c 0,#98989c 1.5px,transparent 1.5px,transparent 2.9px)"></div>
<div class="a" style="left:1069px;top:332px;width:1px;height:309px;background:repeating-linear-gradient(to bottom,#98989c 0,#98989c 1.5px,transparent 1.5px,transparent 2.9px)"></div>
<div class="a" style="left:188px;top:332px;width:1px;height:309px;background:#c8c8cc"></div>
<div class="t" style="top:290.72px;font-size:8.6px;line-height:8.6px;color:#222;left:201.95px;width:80px;text-align:center;transform:scaleX(0.91);transform-origin:center 50%;">Quelle</div>
<div class="t" style="top:290.72px;font-size:8.6px;line-height:8.6px;color:#222;left:277.90px;width:80px;text-align:center;transform:scaleX(0.91);transform-origin:center 50%;">Ziel</div>
<div class="t" style="top:290.72px;font-size:8.6px;line-height:8.6px;color:#222;left:329.95px;width:80px;text-align:center;transform:scaleX(0.91);transform-origin:center 50%;">Quelle</div>
<div class="t" style="top:290.72px;font-size:8.6px;line-height:8.6px;color:#222;left:380.45px;width:80px;text-align:center;transform:scaleX(0.91);transform-origin:center 50%;">Ziel</div>
<div class="t" style="top:290.72px;font-size:8.6px;line-height:8.6px;color:#222;left:428.50px;width:80px;text-align:center;transform:scaleX(0.91);transform-origin:center 50%;">Quelle</div>
<div class="t" style="top:290.72px;font-size:8.6px;line-height:8.6px;color:#222;left:502.90px;width:80px;text-align:center;transform:scaleX(0.91);transform-origin:center 50%;">Ziel</div>
<div class="t" style="top:302.92px;font-size:8.6px;line-height:8.6px;color:#222;left:175.50px;width:80px;text-align:center;transform:scaleX(0.91);transform-origin:center 50%;">Vorgangs-</div>
<div class="t" style="top:312.72px;font-size:8.6px;line-height:8.6px;color:#222;left:175.50px;width:80px;text-align:center;transform:scaleX(0.91);transform-origin:center 50%;">status</div>
<div class="t" style="top:302.92px;font-size:8.6px;line-height:8.6px;color:#2a2aa8;left:244.5px;transform:scaleX(0.91);transform-origin:left 50%;">ID-Vorgang</div>
<div class="t" style="top:312.72px;font-size:8.6px;line-height:8.6px;color:#2a2aa8;left:244.5px;transform:scaleX(0.91);transform-origin:left 50%;">Sortierung</div>
<div class="t" style="top:302.92px;font-size:8.6px;line-height:8.6px;color:#222;left:277.90px;width:80px;text-align:center;transform:scaleX(0.91);transform-origin:center 50%;">ID-Vorgang</div>
<div class="t" style="top:302.92px;font-size:8.6px;line-height:8.6px;color:#2a2aa8;left:329.50px;width:80px;text-align:center;transform:scaleX(0.91);transform-origin:center 50%;">Position</div>
<div class="t" style="top:312.72px;font-size:8.6px;line-height:8.6px;color:#2a2aa8;left:326.00px;width:80px;text-align:center;transform:scaleX(0.91);transform-origin:center 50%;">Sortierung 2</div>
<div class="t" style="top:302.92px;font-size:8.6px;line-height:8.6px;color:#222;left:380.50px;width:80px;text-align:center;transform:scaleX(0.91);transform-origin:center 50%;">Positions-</div>
<div class="t" style="top:312.72px;font-size:8.6px;line-height:8.6px;color:#222;left:380.50px;width:80px;text-align:center;transform:scaleX(0.91);transform-origin:center 50%;">lieferstatus</div>
<div class="t" style="top:302.92px;font-size:8.6px;line-height:8.6px;color:#222;left:428.50px;width:80px;text-align:center;transform:scaleX(0.91);transform-origin:center 50%;">Bedarfstermin</div>
<div class="t" style="top:302.92px;font-size:8.6px;line-height:8.6px;color:#222;left:480.50px;width:80px;text-align:center;transform:scaleX(0.91);transform-origin:center 50%;">Vorgangs-</div>
<div class="t" style="top:312.72px;font-size:8.6px;line-height:8.6px;color:#222;left:480.50px;width:80px;text-align:center;transform:scaleX(0.91);transform-origin:center 50%;">status</div>
<div class="t" style="top:302.92px;font-size:8.6px;line-height:8.6px;color:#222;left:527.90px;width:80px;text-align:center;transform:scaleX(0.91);transform-origin:center 50%;">Termin</div>
<div class="t" style="top:312.72px;font-size:8.6px;line-height:8.6px;color:#222;left:527.90px;width:80px;text-align:center;transform:scaleX(0.91);transform-origin:center 50%;">Fertigung</div>
<div class="t" style="top:322.42px;font-size:8.6px;line-height:8.6px;color:#222;left:527.90px;width:80px;text-align:center;transform:scaleX(0.91);transform-origin:center 50%;">Lieferung</div>
<div class="t" style="top:292.52px;font-size:8.6px;line-height:8.6px;color:#2a2aa8;left:577.00px;width:80px;text-align:center;transform:scaleX(0.91);transform-origin:center 50%;">Artikel-ID</div>
<div class="t" style="top:302.32px;font-size:8.6px;line-height:8.6px;color:#2a2aa8;left:577.00px;width:80px;text-align:center;transform:scaleX(0.91);transform-origin:center 50%;">Sortierung 3</div>
<div class="t" style="top:292.52px;font-size:8.6px;line-height:8.6px;color:#2a2aa8;left:687.00px;width:80px;text-align:center;transform:scaleX(0.91);transform-origin:center 50%;">Bezeichnung 1</div>
<div class="t" style="top:302.32px;font-size:8.6px;line-height:8.6px;color:#2a2aa8;left:687.00px;width:80px;text-align:center;transform:scaleX(0.91);transform-origin:center 50%;">Sortierung 4</div>
<div class="t" style="top:292.52px;font-size:8.6px;line-height:8.6px;color:#2a2aa8;left:842.00px;width:80px;text-align:center;transform:scaleX(0.91);transform-origin:center 50%;">Bezeichnung 2</div>
<div class="t" style="top:302.32px;font-size:8.6px;line-height:8.6px;color:#2a2aa8;left:842.00px;width:80px;text-align:center;transform:scaleX(0.91);transform-origin:center 50%;">Sortierung 5</div>
<div class="t" style="top:292.52px;font-size:8.6px;line-height:8.6px;color:#222;left:947.50px;width:80px;text-align:center;transform:scaleX(0.91);transform-origin:center 50%;">Ziel</div>
<div class="t" style="top:292.52px;font-size:8.6px;line-height:8.6px;color:#222;left:1002.60px;width:80px;text-align:center;transform:scaleX(0.91);transform-origin:center 50%;">Mindest-</div>
<div class="t" style="top:301.92px;font-size:8.6px;line-height:8.6px;color:#222;left:1002.60px;width:80px;text-align:center;transform:scaleX(0.91);transform-origin:center 50%;">bestell-</div>
<div class="t" style="top:311.32px;font-size:8.6px;line-height:8.6px;color:#222;left:1002.60px;width:80px;text-align:center;transform:scaleX(0.91);transform-origin:center 50%;">menge</div>
<div class="a" style="left:1070px;top:289px;width:83px;height:42px;overflow:hidden">
<div class="t" style="top:3.52px;font-size:8.6px;line-height:8.6px;color:#222;left:3.00px;width:80px;text-align:right;transform:scaleX(0.91);transform-origin:right 50%;">Liefe</div>
</div>
<svg class="a" style="left:287px;top:311px" width="8" height="11" viewBox="0 0 8 11"><path d="M4 0.5 L7.5 4.5 H5.5 V10.5 H2.5 V4.5 H0.5z" fill="#3a8ac8" stroke="#2a6a9a" stroke-width="0.6"/></svg>
<svg class="a" style="left:391px;top:311px" width="8" height="11" viewBox="0 0 8 11"><path d="M4 0.5 L7.5 4.5 H5.5 V10.5 H2.5 V4.5 H0.5z" fill="#3a8ac8" stroke="#2a6a9a" stroke-width="0.6"/></svg>
<svg class="a" style="left:642px;top:306px" width="8" height="11" viewBox="0 0 8 11"><path d="M4 0.5 L7.5 4.5 H5.5 V10.5 H2.5 V4.5 H0.5z" fill="#3a8ac8" stroke="#2a6a9a" stroke-width="0.6"/></svg>
<svg class="a" style="left:796px;top:306px" width="8" height="11" viewBox="0 0 8 11"><path d="M4 0.5 L7.5 4.5 H5.5 V10.5 H2.5 V4.5 H0.5z" fill="#3a8ac8" stroke="#2a6a9a" stroke-width="0.6"/></svg>
<svg class="a" style="left:951px;top:306px" width="8" height="11" viewBox="0 0 8 11"><path d="M4 0.5 L7.5 4.5 H5.5 V10.5 H2.5 V4.5 H0.5z" fill="#3a8ac8" stroke="#2a6a9a" stroke-width="0.6"/></svg>
<svg class="a" style="left:177px;top:304px" width="8" height="13" viewBox="0 0 8 13"><path d="M4 0.5 L7.5 4 H5.5 V9 H7.5 L4 12.5 L0.5 9 H2.5 V4 H0.5z" fill="#3a8ac8" stroke="#2a6a9a" stroke-width="0.6"/></svg>
<div class="a" style="left:188px;top:332px;width:53px;height:309px;overflow:hidden">
<div class="t" style="top:2.61px;font-size:9.2px;line-height:9.2px;color:#7c1c1c;left:-17.50px;width:90px;text-align:center;transform:scaleX(0.85);transform-origin:center 50%;-webkit-text-stroke:0.25px currentColor;">Bestätigt</div>
<div class="t" style="top:16.00px;font-size:9.2px;line-height:9.2px;color:#7c1c1c;left:-17.50px;width:90px;text-align:center;transform:scaleX(0.85);transform-origin:center 50%;-webkit-text-stroke:0.25px currentColor;">Bestätigt</div>
<div class="t" style="top:29.39px;font-size:9.2px;line-height:9.2px;color:#7c1c1c;left:-17.50px;width:90px;text-align:center;transform:scaleX(0.85);transform-origin:center 50%;-webkit-text-stroke:0.25px currentColor;">Bestätigt</div>
<div class="t" style="top:42.78px;font-size:9.2px;line-height:9.2px;color:#7c1c1c;left:-17.50px;width:90px;text-align:center;transform:scaleX(0.85);transform-origin:center 50%;-webkit-text-stroke:0.25px currentColor;">Bestätigt</div>
<div class="t" style="top:56.17px;font-size:9.2px;line-height:9.2px;color:#7c1c1c;left:-17.50px;width:90px;text-align:center;transform:scaleX(0.85);transform-origin:center 50%;-webkit-text-stroke:0.25px currentColor;">Bestätigt</div>
<div class="t" style="top:69.56px;font-size:9.2px;line-height:9.2px;color:#7c1c1c;left:-17.50px;width:90px;text-align:center;transform:scaleX(0.85);transform-origin:center 50%;-webkit-text-stroke:0.25px currentColor;">Fertig</div>
<div class="t" style="top:82.95px;font-size:9.2px;line-height:9.2px;color:#1c1c78;left:-17.50px;width:90px;text-align:center;transform:scaleX(0.85);transform-origin:center 50%;-webkit-text-stroke:0.25px currentColor;">Fertig</div>
<div class="t" style="top:96.34px;font-size:9.2px;line-height:9.2px;color:#1c1c78;left:-17.50px;width:90px;text-align:center;transform:scaleX(0.85);transform-origin:center 50%;-webkit-text-stroke:0.25px currentColor;">Fertig</div>
<div class="t" style="top:109.73px;font-size:9.2px;line-height:9.2px;color:#1c1c78;left:-17.50px;width:90px;text-align:center;transform:scaleX(0.85);transform-origin:center 50%;-webkit-text-stroke:0.25px currentColor;">Fertig</div>
<div class="t" style="top:123.12px;font-size:9.2px;line-height:9.2px;color:#1c1c78;left:-17.50px;width:90px;text-align:center;transform:scaleX(0.85);transform-origin:center 50%;-webkit-text-stroke:0.25px currentColor;">Fertig</div>
<div class="t" style="top:136.51px;font-size:9.2px;line-height:9.2px;color:#1c1c78;left:-17.50px;width:90px;text-align:center;transform:scaleX(0.85);transform-origin:center 50%;-webkit-text-stroke:0.25px currentColor;">Fertig</div>
<div class="t" style="top:149.90px;font-size:9.2px;line-height:9.2px;color:#1c1c78;left:-17.50px;width:90px;text-align:center;transform:scaleX(0.85);transform-origin:center 50%;-webkit-text-stroke:0.25px currentColor;">Fertig</div>
<div class="t" style="top:163.29px;font-size:9.2px;line-height:9.2px;color:#222222;left:-17.50px;width:90px;text-align:center;transform:scaleX(0.85);transform-origin:center 50%;-webkit-text-stroke:0.25px currentColor;">Fertig</div>
<div class="t" style="top:176.68px;font-size:9.2px;line-height:9.2px;color:#7c1c1c;left:-17.50px;width:90px;text-align:center;transform:scaleX(0.85);transform-origin:center 50%;-webkit-text-stroke:0.25px currentColor;">Bestätigt</div>
<div class="t" style="top:190.07px;font-size:9.2px;line-height:9.2px;color:#7c1c1c;left:-17.50px;width:90px;text-align:center;transform:scaleX(0.85);transform-origin:center 50%;-webkit-text-stroke:0.25px currentColor;">Bestätigt</div>
<div class="t" style="top:203.46px;font-size:9.2px;line-height:9.2px;color:#1c1c78;left:-17.50px;width:90px;text-align:center;transform:scaleX(0.85);transform-origin:center 50%;-webkit-text-stroke:0.25px currentColor;">Bestätigt</div>
<div class="t" style="top:216.85px;font-size:9.2px;line-height:9.2px;color:#e040e0;left:-17.50px;width:90px;text-align:center;transform:scaleX(0.85);transform-origin:center 50%;-webkit-text-stroke:0.25px currentColor;">Bestätigt</div>
<div class="t" style="top:230.24px;font-size:9.2px;line-height:9.2px;color:#7c1c1c;left:-17.50px;width:90px;text-align:center;transform:scaleX(0.85);transform-origin:center 50%;-webkit-text-stroke:0.25px currentColor;">Bestätigt</div>
<div class="t" style="top:243.63px;font-size:9.2px;line-height:9.2px;color:#e040e0;left:-17.50px;width:90px;text-align:center;transform:scaleX(0.85);transform-origin:center 50%;-webkit-text-stroke:0.25px currentColor;">Bestätigt</div>
<div class="t" style="top:257.02px;font-size:9.2px;line-height:9.2px;color:#1c1c78;left:-17.50px;width:90px;text-align:center;transform:scaleX(0.85);transform-origin:center 50%;-webkit-text-stroke:0.25px currentColor;">Bestätigt</div>
<div class="t" style="top:270.41px;font-size:9.2px;line-height:9.2px;color:#1c1c78;left:-17.50px;width:90px;text-align:center;transform:scaleX(0.85);transform-origin:center 50%;-webkit-text-stroke:0.25px currentColor;">Bestätigt</div>
<div class="t" style="top:283.80px;font-size:9.2px;line-height:9.2px;color:#1c1c78;left:-17.50px;width:90px;text-align:center;transform:scaleX(0.85);transform-origin:center 50%;-webkit-text-stroke:0.25px currentColor;">Bestätigt</div>
<div class="t" style="top:297.19px;font-size:9.2px;line-height:9.2px;color:#7c1c1c;left:-17.50px;width:90px;text-align:center;transform:scaleX(0.85);transform-origin:center 50%;-webkit-text-stroke:0.25px currentColor;">In Arbeit</div>
</div>
<div class="a" style="left:242px;top:332px;width:52px;height:309px;overflow:hidden">
<div class="t" style="top:2.61px;font-size:9.2px;line-height:9.2px;color:#2323a8;text-decoration:underline;left:-18.05px;width:90px;text-align:center;transform:scaleX(0.85);transform-origin:center 50%;-webkit-text-stroke:0.25px currentColor;">AUF0090</div>
<div class="t" style="top:16.00px;font-size:9.2px;line-height:9.2px;color:#2323a8;text-decoration:underline;left:-18.05px;width:90px;text-align:center;transform:scaleX(0.85);transform-origin:center 50%;-webkit-text-stroke:0.25px currentColor;">AUF0091</div>
<div class="t" style="top:29.39px;font-size:9.2px;line-height:9.2px;color:#2323a8;text-decoration:underline;left:-18.05px;width:90px;text-align:center;transform:scaleX(0.85);transform-origin:center 50%;-webkit-text-stroke:0.25px currentColor;">AUF0092</div>
<div class="t" style="top:42.78px;font-size:9.2px;line-height:9.2px;color:#2323a8;text-decoration:underline;left:-18.05px;width:90px;text-align:center;transform:scaleX(0.85);transform-origin:center 50%;-webkit-text-stroke:0.25px currentColor;">AUF0093</div>
<div class="t" style="top:56.17px;font-size:9.2px;line-height:9.2px;color:#2323a8;text-decoration:underline;left:-18.05px;width:90px;text-align:center;transform:scaleX(0.85);transform-origin:center 50%;-webkit-text-stroke:0.25px currentColor;">AUF0094</div>
<div class="t" style="top:69.56px;font-size:9.2px;line-height:9.2px;color:#2323a8;text-decoration:underline;left:-18.05px;width:90px;text-align:center;transform:scaleX(0.85);transform-origin:center 50%;-webkit-text-stroke:0.25px currentColor;">FA0271</div>
<div class="t" style="top:82.95px;font-size:9.2px;line-height:9.2px;color:#2323a8;text-decoration:underline;left:-18.05px;width:90px;text-align:center;transform:scaleX(0.85);transform-origin:center 50%;-webkit-text-stroke:0.25px currentColor;">FA0271</div>
<div class="t" style="top:96.34px;font-size:9.2px;line-height:9.2px;color:#2323a8;text-decoration:underline;left:-18.05px;width:90px;text-align:center;transform:scaleX(0.85);transform-origin:center 50%;-webkit-text-stroke:0.25px currentColor;">FA0271</div>
<div class="t" style="top:109.73px;font-size:9.2px;line-height:9.2px;color:#2323a8;text-decoration:underline;left:-18.05px;width:90px;text-align:center;transform:scaleX(0.85);transform-origin:center 50%;-webkit-text-stroke:0.25px currentColor;">FA0271</div>
<div class="t" style="top:123.12px;font-size:9.2px;line-height:9.2px;color:#2323a8;text-decoration:underline;left:-18.05px;width:90px;text-align:center;transform:scaleX(0.85);transform-origin:center 50%;-webkit-text-stroke:0.25px currentColor;">FA0271</div>
<div class="t" style="top:136.51px;font-size:9.2px;line-height:9.2px;color:#2323a8;text-decoration:underline;left:-18.05px;width:90px;text-align:center;transform:scaleX(0.85);transform-origin:center 50%;-webkit-text-stroke:0.25px currentColor;">FA0271</div>
<div class="t" style="top:149.90px;font-size:9.2px;line-height:9.2px;color:#2323a8;text-decoration:underline;left:-18.05px;width:90px;text-align:center;transform:scaleX(0.85);transform-origin:center 50%;-webkit-text-stroke:0.25px currentColor;">FA0271</div>
<div class="t" style="top:163.29px;font-size:9.2px;line-height:9.2px;color:#2323a8;text-decoration:underline;left:-18.05px;width:90px;text-align:center;transform:scaleX(0.85);transform-origin:center 50%;-webkit-text-stroke:0.25px currentColor;">FA0271</div>
<div class="t" style="top:176.68px;font-size:9.2px;line-height:9.2px;color:#2323a8;text-decoration:underline;left:-18.05px;width:90px;text-align:center;transform:scaleX(0.85);transform-origin:center 50%;-webkit-text-stroke:0.25px currentColor;">FA0272</div>
<div class="t" style="top:190.07px;font-size:9.2px;line-height:9.2px;color:#2323a8;text-decoration:underline;left:-18.05px;width:90px;text-align:center;transform:scaleX(0.85);transform-origin:center 50%;-webkit-text-stroke:0.25px currentColor;">FA0272</div>
<div class="t" style="top:203.46px;font-size:9.2px;line-height:9.2px;color:#2323a8;text-decoration:underline;left:-18.05px;width:90px;text-align:center;transform:scaleX(0.85);transform-origin:center 50%;-webkit-text-stroke:0.25px currentColor;">FA0272</div>
<div class="t" style="top:216.85px;font-size:9.2px;line-height:9.2px;color:#2323a8;text-decoration:underline;left:-18.05px;width:90px;text-align:center;transform:scaleX(0.85);transform-origin:center 50%;-webkit-text-stroke:0.25px currentColor;">FA0272</div>
<div class="t" style="top:230.24px;font-size:9.2px;line-height:9.2px;color:#2323a8;text-decoration:underline;left:-18.05px;width:90px;text-align:center;transform:scaleX(0.85);transform-origin:center 50%;-webkit-text-stroke:0.25px currentColor;">FA0272</div>
<div class="t" style="top:243.63px;font-size:9.2px;line-height:9.2px;color:#2323a8;text-decoration:underline;left:-18.05px;width:90px;text-align:center;transform:scaleX(0.85);transform-origin:center 50%;-webkit-text-stroke:0.25px currentColor;">FA0272</div>
<div class="t" style="top:257.02px;font-size:9.2px;line-height:9.2px;color:#2323a8;text-decoration:underline;left:-18.05px;width:90px;text-align:center;transform:scaleX(0.85);transform-origin:center 50%;-webkit-text-stroke:0.25px currentColor;">FA0272</div>
<div class="t" style="top:270.41px;font-size:9.2px;line-height:9.2px;color:#2323a8;text-decoration:underline;left:-18.05px;width:90px;text-align:center;transform:scaleX(0.85);transform-origin:center 50%;-webkit-text-stroke:0.25px currentColor;">FA0273</div>
<div class="t" style="top:283.80px;font-size:9.2px;line-height:9.2px;color:#2323a8;text-decoration:underline;left:-18.05px;width:90px;text-align:center;transform:scaleX(0.85);transform-origin:center 50%;-webkit-text-stroke:0.25px currentColor;">FA0274</div>
<div class="t" style="top:297.19px;font-size:9.2px;line-height:9.2px;color:#2323a8;text-decoration:underline;left:-18.05px;width:90px;text-align:center;transform:scaleX(0.85);transform-origin:center 50%;-webkit-text-stroke:0.25px currentColor;">FA0275</div>
</div>
<div class="a" style="left:295px;top:332px;width:44px;height:309px;overflow:hidden">
<div class="t" style="top:2.61px;font-size:9.2px;line-height:9.2px;color:#2323a8;text-decoration:underline;left:-22.10px;width:90px;text-align:center;transform:scaleX(0.85);transform-origin:center 50%;-webkit-text-stroke:0.25px currentColor;">FA0271</div>
<div class="t" style="top:16.00px;font-size:9.2px;line-height:9.2px;color:#2323a8;text-decoration:underline;left:-22.10px;width:90px;text-align:center;transform:scaleX(0.85);transform-origin:center 50%;-webkit-text-stroke:0.25px currentColor;">FA0275</div>
<div class="t" style="top:29.39px;font-size:9.2px;line-height:9.2px;color:#2323a8;text-decoration:underline;left:-22.10px;width:90px;text-align:center;transform:scaleX(0.85);transform-origin:center 50%;-webkit-text-stroke:0.25px currentColor;">FA0280</div>
<div class="t" style="top:42.78px;font-size:9.2px;line-height:9.2px;color:#2323a8;text-decoration:underline;left:-22.10px;width:90px;text-align:center;transform:scaleX(0.85);transform-origin:center 50%;-webkit-text-stroke:0.25px currentColor;">FA0285</div>
<div class="t" style="top:56.17px;font-size:9.2px;line-height:9.2px;color:#2323a8;text-decoration:underline;left:-22.10px;width:90px;text-align:center;transform:scaleX(0.85);transform-origin:center 50%;-webkit-text-stroke:0.25px currentColor;">FA0290</div>
<div class="t" style="top:69.56px;font-size:9.2px;line-height:9.2px;color:#2323a8;text-decoration:underline;left:-22.10px;width:90px;text-align:center;transform:scaleX(0.85);transform-origin:center 50%;-webkit-text-stroke:0.25px currentColor;">FA0272</div>
<div class="t" style="top:82.95px;font-size:9.2px;line-height:9.2px;color:#2323a8;text-decoration:underline;left:-22.10px;width:90px;text-align:center;transform:scaleX(0.85);transform-origin:center 50%;-webkit-text-stroke:0.25px currentColor;">BE0161</div>
<div class="t" style="top:96.34px;font-size:9.2px;line-height:9.2px;color:#2323a8;text-decoration:underline;left:-22.10px;width:90px;text-align:center;transform:scaleX(0.85);transform-origin:center 50%;-webkit-text-stroke:0.25px currentColor;">BE0161</div>
<div class="t" style="top:109.73px;font-size:9.2px;line-height:9.2px;color:#2323a8;text-decoration:underline;left:-22.10px;width:90px;text-align:center;transform:scaleX(0.85);transform-origin:center 50%;-webkit-text-stroke:0.25px currentColor;">BE0161</div>
<div class="t" style="top:123.12px;font-size:9.2px;line-height:9.2px;color:#2323a8;text-decoration:underline;left:-22.10px;width:90px;text-align:center;transform:scaleX(0.85);transform-origin:center 50%;-webkit-text-stroke:0.25px currentColor;">BE0162</div>
<div class="t" style="top:136.51px;font-size:9.2px;line-height:9.2px;color:#2323a8;text-decoration:underline;left:-22.10px;width:90px;text-align:center;transform:scaleX(0.85);transform-origin:center 50%;-webkit-text-stroke:0.25px currentColor;">BE0162</div>
<div class="t" style="top:149.90px;font-size:9.2px;line-height:9.2px;color:#2323a8;text-decoration:underline;left:-22.10px;width:90px;text-align:center;transform:scaleX(0.85);transform-origin:center 50%;-webkit-text-stroke:0.25px currentColor;">BE0162</div>
<div class="t" style="top:176.68px;font-size:9.2px;line-height:9.2px;color:#2323a8;text-decoration:underline;left:-22.10px;width:90px;text-align:center;transform:scaleX(0.85);transform-origin:center 50%;-webkit-text-stroke:0.25px currentColor;">FA0274</div>
<div class="t" style="top:190.07px;font-size:9.2px;line-height:9.2px;color:#2323a8;text-decoration:underline;left:-22.10px;width:90px;text-align:center;transform:scaleX(0.85);transform-origin:center 50%;-webkit-text-stroke:0.25px currentColor;">FA0274</div>
<div class="t" style="top:203.46px;font-size:9.2px;line-height:9.2px;color:#2323a8;text-decoration:underline;left:-22.10px;width:90px;text-align:center;transform:scaleX(0.85);transform-origin:center 50%;-webkit-text-stroke:0.25px currentColor;">BE0094</div>
<div class="t" style="top:230.24px;font-size:9.2px;line-height:9.2px;color:#2323a8;text-decoration:underline;left:-22.10px;width:90px;text-align:center;transform:scaleX(0.85);transform-origin:center 50%;-webkit-text-stroke:0.25px currentColor;">FA0273</div>
<div class="t" style="top:257.02px;font-size:9.2px;line-height:9.2px;color:#2323a8;text-decoration:underline;left:-22.10px;width:90px;text-align:center;transform:scaleX(0.85);transform-origin:center 50%;-webkit-text-stroke:0.25px currentColor;">BE0094</div>
<div class="t" style="top:270.41px;font-size:9.2px;line-height:9.2px;color:#2323a8;text-decoration:underline;left:-22.10px;width:90px;text-align:center;transform:scaleX(0.85);transform-origin:center 50%;-webkit-text-stroke:0.25px currentColor;">BE0097</div>
<div class="t" style="top:283.80px;font-size:9.2px;line-height:9.2px;color:#2323a8;text-decoration:underline;left:-22.10px;width:90px;text-align:center;transform:scaleX(0.85);transform-origin:center 50%;-webkit-text-stroke:0.25px currentColor;">BE0095</div>
<div class="t" style="top:297.19px;font-size:9.2px;line-height:9.2px;color:#2323a8;text-decoration:underline;left:-22.10px;width:90px;text-align:center;transform:scaleX(0.85);transform-origin:center 50%;-webkit-text-stroke:0.25px currentColor;">FA0276</div>
</div>
<div class="a" style="left:340px;top:332px;width:59px;height:309px;overflow:hidden">
<div class="t" style="top:2.61px;font-size:9.2px;line-height:9.2px;color:#7c1c1c;left:-4.00px;width:60px;text-align:right;transform:scaleX(0.85);transform-origin:right 50%;-webkit-text-stroke:0.25px currentColor;">1</div>
<div class="t" style="top:16.00px;font-size:9.2px;line-height:9.2px;color:#7c1c1c;left:-4.00px;width:60px;text-align:right;transform:scaleX(0.85);transform-origin:right 50%;-webkit-text-stroke:0.25px currentColor;">1</div>
<div class="t" style="top:29.39px;font-size:9.2px;line-height:9.2px;color:#7c1c1c;left:-4.00px;width:60px;text-align:right;transform:scaleX(0.85);transform-origin:right 50%;-webkit-text-stroke:0.25px currentColor;">1</div>
<div class="t" style="top:42.78px;font-size:9.2px;line-height:9.2px;color:#7c1c1c;left:-4.00px;width:60px;text-align:right;transform:scaleX(0.85);transform-origin:right 50%;-webkit-text-stroke:0.25px currentColor;">1</div>
<div class="t" style="top:56.17px;font-size:9.2px;line-height:9.2px;color:#7c1c1c;left:-4.00px;width:60px;text-align:right;transform:scaleX(0.85);transform-origin:right 50%;-webkit-text-stroke:0.25px currentColor;">1</div>
<div class="t" style="top:69.56px;font-size:9.2px;line-height:9.2px;color:#7c1c1c;left:-4.00px;width:60px;text-align:right;transform:scaleX(0.85);transform-origin:right 50%;-webkit-text-stroke:0.25px currentColor;">1</div>
<div class="t" style="top:82.95px;font-size:9.2px;line-height:9.2px;color:#1c1c78;left:-4.00px;width:60px;text-align:right;transform:scaleX(0.85);transform-origin:right 50%;-webkit-text-stroke:0.25px currentColor;">2</div>
<div class="t" style="top:96.34px;font-size:9.2px;line-height:9.2px;color:#1c1c78;left:-4.00px;width:60px;text-align:right;transform:scaleX(0.85);transform-origin:right 50%;-webkit-text-stroke:0.25px currentColor;">3</div>
<div class="t" style="top:109.73px;font-size:9.2px;line-height:9.2px;color:#1c1c78;left:-4.00px;width:60px;text-align:right;transform:scaleX(0.85);transform-origin:right 50%;-webkit-text-stroke:0.25px currentColor;">4</div>
<div class="t" style="top:123.12px;font-size:9.2px;line-height:9.2px;color:#1c1c78;left:-4.00px;width:60px;text-align:right;transform:scaleX(0.85);transform-origin:right 50%;-webkit-text-stroke:0.25px currentColor;">6</div>
<div class="t" style="top:136.51px;font-size:9.2px;line-height:9.2px;color:#1c1c78;left:-4.00px;width:60px;text-align:right;transform:scaleX(0.85);transform-origin:right 50%;-webkit-text-stroke:0.25px currentColor;">7</div>
<div class="t" style="top:149.90px;font-size:9.2px;line-height:9.2px;color:#1c1c78;left:-4.00px;width:60px;text-align:right;transform:scaleX(0.85);transform-origin:right 50%;-webkit-text-stroke:0.25px currentColor;">8</div>
<div class="t" style="top:163.29px;font-size:9.2px;line-height:9.2px;color:#222222;left:-4.00px;width:60px;text-align:right;transform:scaleX(0.85);transform-origin:right 50%;-webkit-text-stroke:0.25px currentColor;">9</div>
<div class="t" style="top:176.68px;font-size:9.2px;line-height:9.2px;color:#7c1c1c;left:-4.00px;width:60px;text-align:right;transform:scaleX(0.85);transform-origin:right 50%;-webkit-text-stroke:0.25px currentColor;">1</div>
<div class="t" style="top:190.07px;font-size:9.2px;line-height:9.2px;color:#7c1c1c;left:-4.00px;width:60px;text-align:right;transform:scaleX(0.85);transform-origin:right 50%;-webkit-text-stroke:0.25px currentColor;">2</div>
<div class="t" style="top:203.46px;font-size:9.2px;line-height:9.2px;color:#1c1c78;left:-4.00px;width:60px;text-align:right;transform:scaleX(0.85);transform-origin:right 50%;-webkit-text-stroke:0.25px currentColor;">3</div>
<div class="t" style="top:216.85px;font-size:9.2px;line-height:9.2px;color:#e040e0;left:-4.00px;width:60px;text-align:right;transform:scaleX(0.85);transform-origin:right 50%;-webkit-text-stroke:0.25px currentColor;">5</div>
<div class="t" style="top:230.24px;font-size:9.2px;line-height:9.2px;color:#7c1c1c;left:-4.00px;width:60px;text-align:right;transform:scaleX(0.85);transform-origin:right 50%;-webkit-text-stroke:0.25px currentColor;">6</div>
<div class="t" style="top:243.63px;font-size:9.2px;line-height:9.2px;color:#e040e0;left:-4.00px;width:60px;text-align:right;transform:scaleX(0.85);transform-origin:right 50%;-webkit-text-stroke:0.25px currentColor;">6</div>
<div class="t" style="top:257.02px;font-size:9.2px;line-height:9.2px;color:#1c1c78;left:-4.00px;width:60px;text-align:right;transform:scaleX(0.85);transform-origin:right 50%;-webkit-text-stroke:0.25px currentColor;">7</div>
<div class="t" style="top:270.41px;font-size:9.2px;line-height:9.2px;color:#1c1c78;left:-4.00px;width:60px;text-align:right;transform:scaleX(0.85);transform-origin:right 50%;-webkit-text-stroke:0.25px currentColor;">1</div>
<div class="t" style="top:283.80px;font-size:9.2px;line-height:9.2px;color:#1c1c78;left:-4.00px;width:60px;text-align:right;transform:scaleX(0.85);transform-origin:right 50%;-webkit-text-stroke:0.25px currentColor;">1</div>
<div class="t" style="top:297.19px;font-size:9.2px;line-height:9.2px;color:#7c1c1c;left:-4.00px;width:60px;text-align:right;transform:scaleX(0.85);transform-origin:right 50%;-webkit-text-stroke:0.25px currentColor;">1</div>
</div>
<div class="a" style="left:400px;top:332px;width:40px;height:309px;overflow:hidden">
<div class="t" style="top:82.95px;font-size:9.2px;line-height:9.2px;color:#1c1c78;left:-24.55px;width:90px;text-align:center;transform:scaleX(0.85);transform-origin:center 50%;-webkit-text-stroke:0.25px currentColor;">Geliefert</div>
<div class="t" style="top:96.34px;font-size:9.2px;line-height:9.2px;color:#1c1c78;left:-24.55px;width:90px;text-align:center;transform:scaleX(0.85);transform-origin:center 50%;-webkit-text-stroke:0.25px currentColor;">Geliefert</div>
<div class="t" style="top:109.73px;font-size:9.2px;line-height:9.2px;color:#1c1c78;left:-24.55px;width:90px;text-align:center;transform:scaleX(0.85);transform-origin:center 50%;-webkit-text-stroke:0.25px currentColor;">Geliefert</div>
<div class="t" style="top:123.12px;font-size:9.2px;line-height:9.2px;color:#1c1c78;left:-24.55px;width:90px;text-align:center;transform:scaleX(0.85);transform-origin:center 50%;-webkit-text-stroke:0.25px currentColor;">Angelegt</div>
<div class="t" style="top:136.51px;font-size:9.2px;line-height:9.2px;color:#1c1c78;left:-24.55px;width:90px;text-align:center;transform:scaleX(0.85);transform-origin:center 50%;-webkit-text-stroke:0.25px currentColor;">Angelegt</div>
<div class="t" style="top:149.90px;font-size:9.2px;line-height:9.2px;color:#1c1c78;left:-24.55px;width:90px;text-align:center;transform:scaleX(0.85);transform-origin:center 50%;-webkit-text-stroke:0.25px currentColor;">Angelegt</div>
<div class="t" style="top:203.46px;font-size:9.2px;line-height:9.2px;color:#1c1c78;left:-24.55px;width:90px;text-align:center;transform:scaleX(0.85);transform-origin:center 50%;-webkit-text-stroke:0.25px currentColor;">Angelegt</div>
<div class="t" style="top:257.02px;font-size:9.2px;line-height:9.2px;color:#1c1c78;left:-24.55px;width:90px;text-align:center;transform:scaleX(0.85);transform-origin:center 50%;-webkit-text-stroke:0.25px currentColor;">Angelegt</div>
<div class="t" style="top:270.41px;font-size:9.2px;line-height:9.2px;color:#1c1c78;left:-24.55px;width:90px;text-align:center;transform:scaleX(0.85);transform-origin:center 50%;-webkit-text-stroke:0.25px currentColor;">Angelegt</div>
<div class="t" style="top:283.80px;font-size:9.2px;line-height:9.2px;color:#1c1c78;left:-24.55px;width:90px;text-align:center;transform:scaleX(0.85);transform-origin:center 50%;-webkit-text-stroke:0.25px currentColor;">Angelegt</div>
</div>
<div class="a" style="left:441px;top:332px;width:54px;height:309px;overflow:hidden">
<div class="t" style="top:2.61px;font-size:9.2px;line-height:9.2px;color:#7c1c1c;left:-17.50px;width:90px;text-align:center;transform:scaleX(0.85);transform-origin:center 50%;-webkit-text-stroke:0.25px currentColor;">01.09.2015</div>
<div class="t" style="top:16.00px;font-size:9.2px;line-height:9.2px;color:#7c1c1c;left:-17.50px;width:90px;text-align:center;transform:scaleX(0.85);transform-origin:center 50%;-webkit-text-stroke:0.25px currentColor;">29.08.2015</div>
<div class="t" style="top:29.39px;font-size:9.2px;line-height:9.2px;color:#7c1c1c;left:-17.50px;width:90px;text-align:center;transform:scaleX(0.85);transform-origin:center 50%;-webkit-text-stroke:0.25px currentColor;">28.09.2015</div>
<div class="t" style="top:42.78px;font-size:9.2px;line-height:9.2px;color:#7c1c1c;left:-17.50px;width:90px;text-align:center;transform:scaleX(0.85);transform-origin:center 50%;-webkit-text-stroke:0.25px currentColor;">13.08.2015</div>
<div class="t" style="top:69.56px;font-size:9.2px;line-height:9.2px;color:#7c1c1c;left:-17.50px;width:90px;text-align:center;transform:scaleX(0.85);transform-origin:center 50%;-webkit-text-stroke:0.25px currentColor;">01.09.2015</div>
<div class="t" style="top:82.95px;font-size:9.2px;line-height:9.2px;color:#1c1c78;left:-17.50px;width:90px;text-align:center;transform:scaleX(0.85);transform-origin:center 50%;-webkit-text-stroke:0.25px currentColor;">01.09.2015</div>
<div class="t" style="top:96.34px;font-size:9.2px;line-height:9.2px;color:#1c1c78;left:-17.50px;width:90px;text-align:center;transform:scaleX(0.85);transform-origin:center 50%;-webkit-text-stroke:0.25px currentColor;">01.09.2015</div>
<div class="t" style="top:109.73px;font-size:9.2px;line-height:9.2px;color:#1c1c78;left:-17.50px;width:90px;text-align:center;transform:scaleX(0.85);transform-origin:center 50%;-webkit-text-stroke:0.25px currentColor;">01.09.2015</div>
<div class="t" style="top:123.12px;font-size:9.2px;line-height:9.2px;color:#1c1c78;left:-17.50px;width:90px;text-align:center;transform:scaleX(0.85);transform-origin:center 50%;-webkit-text-stroke:0.25px currentColor;">01.09.2015</div>
<div class="t" style="top:136.51px;font-size:9.2px;line-height:9.2px;color:#1c1c78;left:-17.50px;width:90px;text-align:center;transform:scaleX(0.85);transform-origin:center 50%;-webkit-text-stroke:0.25px currentColor;">01.09.2015</div>
<div class="t" style="top:149.90px;font-size:9.2px;line-height:9.2px;color:#1c1c78;left:-17.50px;width:90px;text-align:center;transform:scaleX(0.85);transform-origin:center 50%;-webkit-text-stroke:0.25px currentColor;">01.09.2015</div>
<div class="t" style="top:163.29px;font-size:9.2px;line-height:9.2px;color:#222222;left:-17.50px;width:90px;text-align:center;transform:scaleX(0.85);transform-origin:center 50%;-webkit-text-stroke:0.25px currentColor;">01.09.2015</div>
<div class="t" style="top:176.68px;font-size:9.2px;line-height:9.2px;color:#7c1c1c;left:-17.50px;width:90px;text-align:center;transform:scaleX(0.85);transform-origin:center 50%;-webkit-text-stroke:0.25px currentColor;">31.08.2015</div>
<div class="t" style="top:190.07px;font-size:9.2px;line-height:9.2px;color:#7c1c1c;left:-17.50px;width:90px;text-align:center;transform:scaleX(0.85);transform-origin:center 50%;-webkit-text-stroke:0.25px currentColor;">31.08.2015</div>
<div class="t" style="top:203.46px;font-size:9.2px;line-height:9.2px;color:#1c1c78;left:-17.50px;width:90px;text-align:center;transform:scaleX(0.85);transform-origin:center 50%;-webkit-text-stroke:0.25px currentColor;">31.08.2015</div>
<div class="t" style="top:216.85px;font-size:9.2px;line-height:9.2px;color:#e040e0;left:-17.50px;width:90px;text-align:center;transform:scaleX(0.85);transform-origin:center 50%;-webkit-text-stroke:0.25px currentColor;">01.09.2013</div>
<div class="t" style="top:230.24px;font-size:9.2px;line-height:9.2px;color:#7c1c1c;left:-17.50px;width:90px;text-align:center;transform:scaleX(0.85);transform-origin:center 50%;-webkit-text-stroke:0.25px currentColor;">31.08.2015</div>
<div class="t" style="top:243.63px;font-size:9.2px;line-height:9.2px;color:#e040e0;left:-17.50px;width:90px;text-align:center;transform:scaleX(0.85);transform-origin:center 50%;-webkit-text-stroke:0.25px currentColor;">01.09.2015</div>
<div class="t" style="top:257.02px;font-size:9.2px;line-height:9.2px;color:#1c1c78;left:-17.50px;width:90px;text-align:center;transform:scaleX(0.85);transform-origin:center 50%;-webkit-text-stroke:0.25px currentColor;">31.08.2015</div>
<div class="t" style="top:270.41px;font-size:9.2px;line-height:9.2px;color:#1c1c78;left:-17.50px;width:90px;text-align:center;transform:scaleX(0.85);transform-origin:center 50%;-webkit-text-stroke:0.25px currentColor;">31.08.2015</div>
<div class="t" style="top:283.80px;font-size:9.2px;line-height:9.2px;color:#1c1c78;left:-17.50px;width:90px;text-align:center;transform:scaleX(0.85);transform-origin:center 50%;-webkit-text-stroke:0.25px currentColor;">31.08.2015</div>
<div class="t" style="top:297.19px;font-size:9.2px;line-height:9.2px;color:#7c1c1c;left:-17.50px;width:90px;text-align:center;transform:scaleX(0.85);transform-origin:center 50%;-webkit-text-stroke:0.25px currentColor;">28.08.2015</div>
</div>
<div class="a" style="left:496px;top:332px;width:49px;height:309px;overflow:hidden">
<div class="t" style="top:2.61px;font-size:9.2px;line-height:9.2px;color:#7c1c1c;left:-20.45px;width:90px;text-align:center;transform:scaleX(0.85);transform-origin:center 50%;-webkit-text-stroke:0.25px currentColor;">Fertig</div>
<div class="t" style="top:16.00px;font-size:9.2px;line-height:9.2px;color:#7c1c1c;left:-20.45px;width:90px;text-align:center;transform:scaleX(0.85);transform-origin:center 50%;-webkit-text-stroke:0.25px currentColor;">In Arbeit</div>
<div class="t" style="top:29.39px;font-size:9.2px;line-height:9.2px;color:#7c1c1c;left:-20.45px;width:90px;text-align:center;transform:scaleX(0.85);transform-origin:center 50%;-webkit-text-stroke:0.25px currentColor;">Freigegeben</div>
<div class="t" style="top:42.78px;font-size:9.2px;line-height:9.2px;color:#7c1c1c;left:-20.45px;width:90px;text-align:center;transform:scaleX(0.85);transform-origin:center 50%;-webkit-text-stroke:0.25px currentColor;">Fertig</div>
<div class="t" style="top:56.17px;font-size:9.2px;line-height:9.2px;color:#7c1c1c;left:-20.45px;width:90px;text-align:center;transform:scaleX(0.85);transform-origin:center 50%;-webkit-text-stroke:0.25px currentColor;">Bestätigt</div>
<div class="t" style="top:69.56px;font-size:9.2px;line-height:9.2px;color:#7c1c1c;left:-20.45px;width:90px;text-align:center;transform:scaleX(0.85);transform-origin:center 50%;-webkit-text-stroke:0.25px currentColor;">Bestätigt</div>
<div class="t" style="top:82.95px;font-size:9.2px;line-height:9.2px;color:#1c1c78;left:-20.45px;width:90px;text-align:center;transform:scaleX(0.85);transform-origin:center 50%;-webkit-text-stroke:0.25px currentColor;">Freigegeben</div>
<div class="t" style="top:96.34px;font-size:9.2px;line-height:9.2px;color:#1c1c78;left:-20.45px;width:90px;text-align:center;transform:scaleX(0.85);transform-origin:center 50%;-webkit-text-stroke:0.25px currentColor;">Freigegeben</div>
<div class="t" style="top:109.73px;font-size:9.2px;line-height:9.2px;color:#1c1c78;left:-20.45px;width:90px;text-align:center;transform:scaleX(0.85);transform-origin:center 50%;-webkit-text-stroke:0.25px currentColor;">Freigegeben</div>
<div class="t" style="top:123.12px;font-size:9.2px;line-height:9.2px;color:#1c1c78;left:-20.45px;width:90px;text-align:center;transform:scaleX(0.85);transform-origin:center 50%;-webkit-text-stroke:0.25px currentColor;">Freigegeben</div>
<div class="t" style="top:136.51px;font-size:9.2px;line-height:9.2px;color:#1c1c78;left:-20.45px;width:90px;text-align:center;transform:scaleX(0.85);transform-origin:center 50%;-webkit-text-stroke:0.25px currentColor;">Freigegeben</div>
<div class="t" style="top:149.90px;font-size:9.2px;line-height:9.2px;color:#1c1c78;left:-20.45px;width:90px;text-align:center;transform:scaleX(0.85);transform-origin:center 50%;-webkit-text-stroke:0.25px currentColor;">Freigegeben</div>
<div class="t" style="top:176.68px;font-size:9.2px;line-height:9.2px;color:#7c1c1c;left:-20.45px;width:90px;text-align:center;transform:scaleX(0.85);transform-origin:center 50%;-webkit-text-stroke:0.25px currentColor;">Bestätigt</div>
<div class="t" style="top:190.07px;font-size:9.2px;line-height:9.2px;color:#7c1c1c;left:-20.45px;width:90px;text-align:center;transform:scaleX(0.85);transform-origin:center 50%;-webkit-text-stroke:0.25px currentColor;">Bestätigt</div>
<div class="t" style="top:203.46px;font-size:9.2px;line-height:9.2px;color:#1c1c78;left:-20.45px;width:90px;text-align:center;transform:scaleX(0.85);transform-origin:center 50%;-webkit-text-stroke:0.25px currentColor;">Freigegeben</div>
<div class="t" style="top:230.24px;font-size:9.2px;line-height:9.2px;color:#7c1c1c;left:-20.45px;width:90px;text-align:center;transform:scaleX(0.85);transform-origin:center 50%;-webkit-text-stroke:0.25px currentColor;">Bestätigt</div>
<div class="t" style="top:257.02px;font-size:9.2px;line-height:9.2px;color:#1c1c78;left:-20.45px;width:90px;text-align:center;transform:scaleX(0.85);transform-origin:center 50%;-webkit-text-stroke:0.25px currentColor;">Freigegeben</div>
<div class="t" style="top:270.41px;font-size:9.2px;line-height:9.2px;color:#1c1c78;left:-20.45px;width:90px;text-align:center;transform:scaleX(0.85);transform-origin:center 50%;-webkit-text-stroke:0.25px currentColor;">Freigegeben</div>
<div class="t" style="top:283.80px;font-size:9.2px;line-height:9.2px;color:#1c1c78;left:-20.45px;width:90px;text-align:center;transform:scaleX(0.85);transform-origin:center 50%;-webkit-text-stroke:0.25px currentColor;">Freigegeben</div>
<div class="t" style="top:297.19px;font-size:9.2px;line-height:9.2px;color:#7c1c1c;left:-20.45px;width:90px;text-align:center;transform:scaleX(0.85);transform-origin:center 50%;-webkit-text-stroke:0.25px currentColor;">Bestätigt</div>
</div>
<div class="a" style="left:546px;top:332px;width:43px;height:309px;overflow:hidden">
<div class="t" style="top:2.61px;font-size:9.2px;line-height:9.2px;color:#7c1c1c;left:-23.15px;width:90px;text-align:center;transform:scaleX(0.85);transform-origin:center 50%;-webkit-text-stroke:0.25px currentColor;">01.09.2015</div>
<div class="t" style="top:16.00px;font-size:9.2px;line-height:9.2px;color:#7c1c1c;left:-23.15px;width:90px;text-align:center;transform:scaleX(0.85);transform-origin:center 50%;-webkit-text-stroke:0.25px currentColor;">29.08.2015</div>
<div class="t" style="top:29.39px;font-size:9.2px;line-height:9.2px;color:#7c1c1c;left:-23.15px;width:90px;text-align:center;transform:scaleX(0.85);transform-origin:center 50%;-webkit-text-stroke:0.25px currentColor;">04.08.2013</div>
<div class="t" style="top:42.78px;font-size:9.2px;line-height:9.2px;color:#7c1c1c;left:-23.15px;width:90px;text-align:center;transform:scaleX(0.85);transform-origin:center 50%;-webkit-text-stroke:0.25px currentColor;">05.08.2013</div>
<div class="t" style="top:56.17px;font-size:9.2px;line-height:9.2px;color:#e02a2a;left:-23.15px;width:90px;text-align:center;transform:scaleX(0.85);transform-origin:center 50%;-webkit-text-stroke:0.25px currentColor;">14.09.2015</div>
<div class="t" style="top:69.56px;font-size:9.2px;line-height:9.2px;color:#7c1c1c;left:-23.15px;width:90px;text-align:center;transform:scaleX(0.85);transform-origin:center 50%;-webkit-text-stroke:0.25px currentColor;">01.09.2015</div>
<div class="t" style="top:82.95px;font-size:9.2px;line-height:9.2px;color:#1c1c78;left:-23.15px;width:90px;text-align:center;transform:scaleX(0.85);transform-origin:center 50%;-webkit-text-stroke:0.25px currentColor;">01.09.2013</div>
<div class="t" style="top:96.34px;font-size:9.2px;line-height:9.2px;color:#1c1c78;left:-23.15px;width:90px;text-align:center;transform:scaleX(0.85);transform-origin:center 50%;-webkit-text-stroke:0.25px currentColor;">01.09.2013</div>
<div class="t" style="top:109.73px;font-size:9.2px;line-height:9.2px;color:#1c1c78;left:-23.15px;width:90px;text-align:center;transform:scaleX(0.85);transform-origin:center 50%;-webkit-text-stroke:0.25px currentColor;">01.09.2013</div>
<div class="t" style="top:123.12px;font-size:9.2px;line-height:9.2px;color:#1c1c78;left:-23.15px;width:90px;text-align:center;transform:scaleX(0.85);transform-origin:center 50%;-webkit-text-stroke:0.25px currentColor;">01.09.2013</div>
<div class="t" style="top:136.51px;font-size:9.2px;line-height:9.2px;color:#1c1c78;left:-23.15px;width:90px;text-align:center;transform:scaleX(0.85);transform-origin:center 50%;-webkit-text-stroke:0.25px currentColor;">01.09.2013</div>
<div class="t" style="top:149.90px;font-size:9.2px;line-height:9.2px;color:#1c1c78;left:-23.15px;width:90px;text-align:center;transform:scaleX(0.85);transform-origin:center 50%;-webkit-text-stroke:0.25px currentColor;">01.09.2013</div>
<div class="t" style="top:176.68px;font-size:9.2px;line-height:9.2px;color:#7c1c1c;left:-23.15px;width:90px;text-align:center;transform:scaleX(0.85);transform-origin:center 50%;-webkit-text-stroke:0.25px currentColor;">31.08.2015</div>
<div class="t" style="top:190.07px;font-size:9.2px;line-height:9.2px;color:#7c1c1c;left:-23.15px;width:90px;text-align:center;transform:scaleX(0.85);transform-origin:center 50%;-webkit-text-stroke:0.25px currentColor;">31.08.2015</div>
<div class="t" style="top:203.46px;font-size:9.2px;line-height:9.2px;color:#1c1c78;left:-23.15px;width:90px;text-align:center;transform:scaleX(0.85);transform-origin:center 50%;-webkit-text-stroke:0.25px currentColor;">31.07.2014</div>
<div class="t" style="top:230.24px;font-size:9.2px;line-height:9.2px;color:#7c1c1c;left:-23.15px;width:90px;text-align:center;transform:scaleX(0.85);transform-origin:center 50%;-webkit-text-stroke:0.25px currentColor;">31.08.2015</div>
<div class="t" style="top:257.02px;font-size:9.2px;line-height:9.2px;color:#1c1c78;left:-23.15px;width:90px;text-align:center;transform:scaleX(0.85);transform-origin:center 50%;-webkit-text-stroke:0.25px currentColor;">31.07.2014</div>
<div class="t" style="top:270.41px;font-size:9.2px;line-height:9.2px;color:#1c1c78;left:-23.15px;width:90px;text-align:center;transform:scaleX(0.85);transform-origin:center 50%;-webkit-text-stroke:0.25px currentColor;">31.07.2014</div>
<div class="t" style="top:283.80px;font-size:9.2px;line-height:9.2px;color:#1c1c78;left:-23.15px;width:90px;text-align:center;transform:scaleX(0.85);transform-origin:center 50%;-webkit-text-stroke:0.25px currentColor;">31.07.2014</div>
<div class="t" style="top:297.19px;font-size:9.2px;line-height:9.2px;color:#7c1c1c;left:-23.15px;width:90px;text-align:center;transform:scaleX(0.85);transform-origin:center 50%;-webkit-text-stroke:0.25px currentColor;">28.08.2015</div>
</div>
<div class="a" style="left:590px;top:332px;width:58px;height:309px;overflow:hidden">
<div class="t" style="top:2.61px;font-size:9.2px;line-height:9.2px;color:#7c1c1c;left:3.6000000000000227px;transform:scaleX(0.85);transform-origin:left 50%;-webkit-text-stroke:0.25px currentColor;">A0001</div>
<div class="t" style="top:16.00px;font-size:9.2px;line-height:9.2px;color:#7c1c1c;left:3.6000000000000227px;transform:scaleX(0.85);transform-origin:left 50%;-webkit-text-stroke:0.25px currentColor;">A0001</div>
<div class="t" style="top:29.39px;font-size:9.2px;line-height:9.2px;color:#7c1c1c;left:3.6000000000000227px;transform:scaleX(0.85);transform-origin:left 50%;-webkit-text-stroke:0.25px currentColor;">A0001</div>
<div class="t" style="top:42.78px;font-size:9.2px;line-height:9.2px;color:#7c1c1c;left:3.6000000000000227px;transform:scaleX(0.85);transform-origin:left 50%;-webkit-text-stroke:0.25px currentColor;">A0001</div>
<div class="t" style="top:56.17px;font-size:9.2px;line-height:9.2px;color:#7c1c1c;left:3.6000000000000227px;transform:scaleX(0.85);transform-origin:left 50%;-webkit-text-stroke:0.25px currentColor;">A0001</div>
<div class="t" style="top:69.56px;font-size:9.2px;line-height:9.2px;color:#7c1c1c;left:3.6000000000000227px;transform:scaleX(0.85);transform-origin:left 50%;-webkit-text-stroke:0.25px currentColor;">A0011</div>
<div class="t" style="top:82.95px;font-size:9.2px;line-height:9.2px;color:#1c1c78;left:3.6000000000000227px;transform:scaleX(0.85);transform-origin:left 50%;-webkit-text-stroke:0.25px currentColor;">A0021</div>
<div class="t" style="top:96.34px;font-size:9.2px;line-height:9.2px;color:#1c1c78;left:3.6000000000000227px;transform:scaleX(0.85);transform-origin:left 50%;-webkit-text-stroke:0.25px currentColor;">A0031</div>
<div class="t" style="top:109.73px;font-size:9.2px;line-height:9.2px;color:#1c1c78;left:3.6000000000000227px;transform:scaleX(0.85);transform-origin:left 50%;-webkit-text-stroke:0.25px currentColor;">A0041</div>
<div class="t" style="top:123.12px;font-size:9.2px;line-height:9.2px;color:#1c1c78;left:3.6000000000000227px;transform:scaleX(0.85);transform-origin:left 50%;-webkit-text-stroke:0.25px currentColor;">A0061</div>
<div class="t" style="top:136.51px;font-size:9.2px;line-height:9.2px;color:#1c1c78;left:3.6000000000000227px;transform:scaleX(0.85);transform-origin:left 50%;-webkit-text-stroke:0.25px currentColor;">A0071</div>
<div class="t" style="top:149.90px;font-size:9.2px;line-height:9.2px;color:#1c1c78;left:3.6000000000000227px;transform:scaleX(0.85);transform-origin:left 50%;-webkit-text-stroke:0.25px currentColor;">A0081</div>
<div class="t" style="top:163.29px;font-size:9.2px;line-height:9.2px;color:#222222;left:3.6000000000000227px;transform:scaleX(0.85);transform-origin:left 50%;-webkit-text-stroke:0.25px currentColor;">A0091</div>
<div class="t" style="top:176.68px;font-size:9.2px;line-height:9.2px;color:#7c1c1c;left:3.6000000000000227px;transform:scaleX(0.85);transform-origin:left 50%;-webkit-text-stroke:0.25px currentColor;">A0105</div>
<div class="t" style="top:190.07px;font-size:9.2px;line-height:9.2px;color:#7c1c1c;left:3.6000000000000227px;transform:scaleX(0.85);transform-origin:left 50%;-webkit-text-stroke:0.25px currentColor;">A0105</div>
<div class="t" style="top:203.46px;font-size:9.2px;line-height:9.2px;color:#1c1c78;left:3.6000000000000227px;transform:scaleX(0.85);transform-origin:left 50%;-webkit-text-stroke:0.25px currentColor;">A0103</div>
<div class="t" style="top:216.85px;font-size:9.2px;line-height:9.2px;color:#e040e0;left:3.6000000000000227px;transform:scaleX(0.85);transform-origin:left 50%;-webkit-text-stroke:0.25px currentColor;">A0108</div>
<div class="t" style="top:230.24px;font-size:9.2px;line-height:9.2px;color:#7c1c1c;left:3.6000000000000227px;transform:scaleX(0.85);transform-origin:left 50%;-webkit-text-stroke:0.25px currentColor;">A0101</div>
<div class="t" style="top:243.63px;font-size:9.2px;line-height:9.2px;color:#e040e0;left:3.6000000000000227px;transform:scaleX(0.85);transform-origin:left 50%;-webkit-text-stroke:0.25px currentColor;">A0110</div>
<div class="t" style="top:257.02px;font-size:9.2px;line-height:9.2px;color:#1c1c78;left:3.6000000000000227px;transform:scaleX(0.85);transform-origin:left 50%;-webkit-text-stroke:0.25px currentColor;">A0102</div>
<div class="t" style="top:270.41px;font-size:9.2px;line-height:9.2px;color:#1c1c78;left:3.6000000000000227px;transform:scaleX(0.85);transform-origin:left 50%;-webkit-text-stroke:0.25px currentColor;">A0109</div>
<div class="t" style="top:283.80px;font-size:9.2px;line-height:9.2px;color:#1c1c78;left:3.6000000000000227px;transform:scaleX(0.85);transform-origin:left 50%;-webkit-text-stroke:0.25px currentColor;">A0106</div>
<div class="t" style="top:297.19px;font-size:9.2px;line-height:9.2px;color:#7c1c1c;left:3.6000000000000227px;transform:scaleX(0.85);transform-origin:left 50%;-webkit-text-stroke:0.25px currentColor;">A0011</div>
</div>
<div class="a" style="left:649px;top:332px;width:154px;height:309px;overflow:hidden">
<div class="t" style="top:2.61px;font-size:9.2px;line-height:9.2px;color:#7c1c1c;left:3.2999999999999545px;transform:scaleX(0.85);transform-origin:left 50%;-webkit-text-stroke:0.25px currentColor;">Bateriekasten</div>
<div class="t" style="top:16.00px;font-size:9.2px;line-height:9.2px;color:#7c1c1c;left:3.2999999999999545px;transform:scaleX(0.85);transform-origin:left 50%;-webkit-text-stroke:0.25px currentColor;">Batteriekasten</div>
<div class="t" style="top:29.39px;font-size:9.2px;line-height:9.2px;color:#7c1c1c;left:3.2999999999999545px;transform:scaleX(0.85);transform-origin:left 50%;-webkit-text-stroke:0.25px currentColor;">Batteriekasten</div>
<div class="t" style="top:42.78px;font-size:9.2px;line-height:9.2px;color:#7c1c1c;left:3.2999999999999545px;transform:scaleX(0.85);transform-origin:left 50%;-webkit-text-stroke:0.25px currentColor;">Batteriekasten</div>
<div class="t" style="top:56.17px;font-size:9.2px;line-height:9.2px;color:#7c1c1c;left:3.2999999999999545px;transform:scaleX(0.85);transform-origin:left 50%;-webkit-text-stroke:0.25px currentColor;">Batteriekasten</div>
<div class="t" style="top:69.56px;font-size:9.2px;line-height:9.2px;color:#7c1c1c;left:3.2999999999999545px;transform:scaleX(0.85);transform-origin:left 50%;-webkit-text-stroke:0.25px currentColor;">Kasten geschw.</div>
<div class="t" style="top:82.95px;font-size:9.2px;line-height:9.2px;color:#1c1c78;left:3.2999999999999545px;transform:scaleX(0.85);transform-origin:left 50%;-webkit-text-stroke:0.25px currentColor;">Abdeckung vollst.</div>
<div class="t" style="top:96.34px;font-size:9.2px;line-height:9.2px;color:#1c1c78;left:3.2999999999999545px;transform:scaleX(0.85);transform-origin:left 50%;-webkit-text-stroke:0.25px currentColor;">Platte 376 x 156 x 3 mm</div>
<div class="t" style="top:109.73px;font-size:9.2px;line-height:9.2px;color:#1c1c78;left:3.2999999999999545px;transform:scaleX(0.85);transform-origin:left 50%;-webkit-text-stroke:0.25px currentColor;">Kantenschutz</div>
<div class="t" style="top:123.12px;font-size:9.2px;line-height:9.2px;color:#1c1c78;left:3.2999999999999545px;transform:scaleX(0.85);transform-origin:left 50%;-webkit-text-stroke:0.25px currentColor;">Sechskantmutter M6</div>
<div class="t" style="top:136.51px;font-size:9.2px;line-height:9.2px;color:#1c1c78;left:3.2999999999999545px;transform:scaleX(0.85);transform-origin:left 50%;-webkit-text-stroke:0.25px currentColor;">Sicherungsscheibe Schnorr S6</div>
<div class="t" style="top:149.90px;font-size:9.2px;line-height:9.2px;color:#1c1c78;left:3.2999999999999545px;transform:scaleX(0.85);transform-origin:left 50%;-webkit-text-stroke:0.25px currentColor;">Scheibe 6.4 mm</div>
<div class="t" style="top:163.29px;font-size:9.2px;line-height:9.2px;color:#222222;left:3.2999999999999545px;transform:scaleX(0.85);transform-origin:left 50%;-webkit-text-stroke:0.25px currentColor;">Terokal-Kleber 2444</div>
<div class="t" style="top:176.68px;font-size:9.2px;line-height:9.2px;color:#7c1c1c;left:3.2999999999999545px;transform:scaleX(0.85);transform-origin:left 50%;-webkit-text-stroke:0.25px currentColor;">Boden</div>
<div class="t" style="top:190.07px;font-size:9.2px;line-height:9.2px;color:#7c1c1c;left:3.2999999999999545px;transform:scaleX(0.85);transform-origin:left 50%;-webkit-text-stroke:0.25px currentColor;">Boden</div>
<div class="t" style="top:203.46px;font-size:9.2px;line-height:9.2px;color:#1c1c78;left:3.2999999999999545px;transform:scaleX(0.85);transform-origin:left 50%;-webkit-text-stroke:0.25px currentColor;">Blech</div>
<div class="t" style="top:216.85px;font-size:9.2px;line-height:9.2px;color:#e040e0;left:3.2999999999999545px;transform:scaleX(0.85);transform-origin:left 50%;-webkit-text-stroke:0.25px currentColor;">AlMg3 F/G22/H 12/22/2,0x1500x3000GF</div>
<div class="t" style="top:230.24px;font-size:9.2px;line-height:9.2px;color:#7c1c1c;left:3.2999999999999545px;transform:scaleX(0.85);transform-origin:left 50%;-webkit-text-stroke:0.25px currentColor;">Winkel</div>
<div class="t" style="top:243.63px;font-size:9.2px;line-height:9.2px;color:#e040e0;left:3.2999999999999545px;transform:scaleX(0.85);transform-origin:left 50%;-webkit-text-stroke:0.25px currentColor;">Kooperation Pulverlack</div>
<div class="t" style="top:257.02px;font-size:9.2px;line-height:9.2px;color:#1c1c78;left:3.2999999999999545px;transform:scaleX(0.85);transform-origin:left 50%;-webkit-text-stroke:0.25px currentColor;">Griff</div>
<div class="t" style="top:270.41px;font-size:9.2px;line-height:9.2px;color:#1c1c78;left:3.2999999999999545px;transform:scaleX(0.85);transform-origin:left 50%;-webkit-text-stroke:0.25px currentColor;">Alu-Winkel 15x15x2 AlMgSi 0.5</div>
<div class="t" style="top:283.80px;font-size:9.2px;line-height:9.2px;color:#1c1c78;left:3.2999999999999545px;transform:scaleX(0.85);transform-origin:left 50%;-webkit-text-stroke:0.25px currentColor;">AlSi1MgMn F28-32 3x1500x3000 GF</div>
<div class="t" style="top:297.19px;font-size:9.2px;line-height:9.2px;color:#7c1c1c;left:3.2999999999999545px;transform:scaleX(0.85);transform-origin:left 50%;-webkit-text-stroke:0.25px currentColor;">Kasten geschw.</div>
</div>
<div class="a" style="left:804px;top:332px;width:154px;height:309px;overflow:hidden">
<div class="t" style="top:16.00px;font-size:9.2px;line-height:9.2px;color:#7c1c1c;left:3.5px;transform:scaleX(0.85);transform-origin:left 50%;-webkit-text-stroke:0.25px currentColor;">Al Si1MgMn  -T651, Al Mg3 -H12</div>
<div class="t" style="top:29.39px;font-size:9.2px;line-height:9.2px;color:#7c1c1c;left:3.5px;transform:scaleX(0.85);transform-origin:left 50%;-webkit-text-stroke:0.25px currentColor;">Al Si1MgMn  -T651, Al Mg3 -H12</div>
<div class="t" style="top:42.78px;font-size:9.2px;line-height:9.2px;color:#7c1c1c;left:3.5px;transform:scaleX(0.85);transform-origin:left 50%;-webkit-text-stroke:0.25px currentColor;">Al Si1MgMn  -T651, Al Mg3 -H12</div>
<div class="t" style="top:56.17px;font-size:9.2px;line-height:9.2px;color:#7c1c1c;left:3.5px;transform:scaleX(0.85);transform-origin:left 50%;-webkit-text-stroke:0.25px currentColor;">Al Si1MgMn  -T651, Al Mg3 -H12</div>
<div class="t" style="top:69.56px;font-size:9.2px;line-height:9.2px;color:#7c1c1c;left:3.5px;transform:scaleX(0.85);transform-origin:left 50%;-webkit-text-stroke:0.25px currentColor;">SG , farbbehandelt</div>
<div class="t" style="top:82.95px;font-size:9.2px;line-height:9.2px;color:#1c1c78;left:3.5px;transform:scaleX(0.85);transform-origin:left 50%;-webkit-text-stroke:0.25px currentColor;">ZE 4100007-150167.000</div>
<div class="t" style="top:96.34px;font-size:9.2px;line-height:9.2px;color:#1c1c78;left:3.5px;transform:scaleX(0.85);transform-origin:left 50%;-webkit-text-stroke:0.25px currentColor;">Moosgummi NR, beidseitig mit Haut, schw.</div>
<div class="t" style="top:109.73px;font-size:9.2px;line-height:9.2px;color:#1c1c78;left:3.5px;transform:scaleX(0.85);transform-origin:left 50%;-webkit-text-stroke:0.25px currentColor;">461-0031</div>
<div class="t" style="top:123.12px;font-size:9.2px;line-height:9.2px;color:#1c1c78;left:3.5px;transform:scaleX(0.85);transform-origin:left 50%;-webkit-text-stroke:0.25px currentColor;">DIN 934-8-vz  ISO 4032</div>
<div class="t" style="top:136.51px;font-size:9.2px;line-height:9.2px;color:#1c1c78;left:3.5px;transform:scaleX(0.85);transform-origin:left 50%;-webkit-text-stroke:0.25px currentColor;">verzinkt</div>
<div class="t" style="top:149.90px;font-size:9.2px;line-height:9.2px;color:#1c1c78;left:3.5px;transform:scaleX(0.85);transform-origin:left 50%;-webkit-text-stroke:0.25px currentColor;">DIN 9021/ISO7093-St-verzi</div>
<div class="t" style="top:163.29px;font-size:9.2px;line-height:9.2px;color:#222222;left:3.5px;transform:scaleX(0.85);transform-origin:left 50%;-webkit-text-stroke:0.25px currentColor;">Dose à 340g</div>
<div class="t" style="top:176.68px;font-size:9.2px;line-height:9.2px;color:#7c1c1c;left:3.5px;transform:scaleX(0.85);transform-origin:left 50%;-webkit-text-stroke:0.25px currentColor;">Bl. 3,0  AlSiMgMn-T651</div>
<div class="t" style="top:190.07px;font-size:9.2px;line-height:9.2px;color:#7c1c1c;left:3.5px;transform:scaleX(0.85);transform-origin:left 50%;-webkit-text-stroke:0.25px currentColor;">Bl. 3,0  AlSiMgMn-T651</div>
<div class="t" style="top:203.46px;font-size:9.2px;line-height:9.2px;color:#1c1c78;left:3.5px;transform:scaleX(0.85);transform-origin:left 50%;-webkit-text-stroke:0.25px currentColor;">Bl 2mm DIN 1783  AlMg3</div>
<div class="t" style="top:216.85px;font-size:9.2px;line-height:9.2px;color:#e040e0;left:3.5px;transform:scaleX(0.85);transform-origin:left 50%;-webkit-text-stroke:0.25px currentColor;">DIN EN 573/485 EN AW 5754</div>
<div class="t" style="top:230.24px;font-size:9.2px;line-height:9.2px;color:#7c1c1c;left:3.5px;transform:scaleX(0.85);transform-origin:left 50%;-webkit-text-stroke:0.25px currentColor;">L-DIN1771-AlMgSi0,5F22-15x15x2</div>
<div class="t" style="top:257.02px;font-size:9.2px;line-height:9.2px;color:#1c1c78;left:3.5px;transform:scaleX(0.85);transform-origin:left 50%;-webkit-text-stroke:0.25px currentColor;">Al Mg3 -H111</div>
<div class="t" style="top:270.41px;font-size:9.2px;line-height:9.2px;color:#1c1c78;left:3.5px;transform:scaleX(0.85);transform-origin:left 50%;-webkit-text-stroke:0.25px currentColor;">EN AW-6060-T66 / EN755-2</div>
<div class="t" style="top:283.80px;font-size:9.2px;line-height:9.2px;color:#1c1c78;left:3.5px;transform:scaleX(0.85);transform-origin:left 50%;-webkit-text-stroke:0.25px currentColor;">DIN EN 573/485 EN AW 6082</div>
<div class="t" style="top:297.19px;font-size:9.2px;line-height:9.2px;color:#7c1c1c;left:3.5px;transform:scaleX(0.85);transform-origin:left 50%;-webkit-text-stroke:0.25px currentColor;">SG , farbbehandelt</div>
</div>
<div class="a" style="left:959px;top:332px;width:56px;height:309px;overflow:hidden">
<div class="t" style="top:2.61px;font-size:9.2px;line-height:9.2px;color:#7c1c1c;left:2.6000000000000227px;transform:scaleX(0.85);transform-origin:left 50%;-webkit-text-stroke:0.25px currentColor;">Fertigung</div>
<div class="t" style="top:16.00px;font-size:9.2px;line-height:9.2px;color:#7c1c1c;left:2.6000000000000227px;transform:scaleX(0.85);transform-origin:left 50%;-webkit-text-stroke:0.25px currentColor;">Fertigung</div>
<div class="t" style="top:29.39px;font-size:9.2px;line-height:9.2px;color:#7c1c1c;left:2.6000000000000227px;transform:scaleX(0.85);transform-origin:left 50%;-webkit-text-stroke:0.25px currentColor;">Fertigung</div>
<div class="t" style="top:42.78px;font-size:9.2px;line-height:9.2px;color:#7c1c1c;left:2.6000000000000227px;transform:scaleX(0.85);transform-origin:left 50%;-webkit-text-stroke:0.25px currentColor;">Fertigung</div>
<div class="t" style="top:56.17px;font-size:9.2px;line-height:9.2px;color:#7c1c1c;left:2.6000000000000227px;transform:scaleX(0.85);transform-origin:left 50%;-webkit-text-stroke:0.25px currentColor;">Fertigung</div>
<div class="t" style="top:69.56px;font-size:9.2px;line-height:9.2px;color:#7c1c1c;left:2.6000000000000227px;transform:scaleX(0.85);transform-origin:left 50%;-webkit-text-stroke:0.25px currentColor;">Fertigung</div>
<div class="t" style="top:82.95px;font-size:9.2px;line-height:9.2px;color:#1c1c78;left:2.6000000000000227px;transform:scaleX(0.85);transform-origin:left 50%;-webkit-text-stroke:0.25px currentColor;">Einkauf</div>
<div class="t" style="top:96.34px;font-size:9.2px;line-height:9.2px;color:#1c1c78;left:2.6000000000000227px;transform:scaleX(0.85);transform-origin:left 50%;-webkit-text-stroke:0.25px currentColor;">Einkauf</div>
<div class="t" style="top:109.73px;font-size:9.2px;line-height:9.2px;color:#1c1c78;left:2.6000000000000227px;transform:scaleX(0.85);transform-origin:left 50%;-webkit-text-stroke:0.25px currentColor;">Einkauf</div>
<div class="t" style="top:123.12px;font-size:9.2px;line-height:9.2px;color:#1c1c78;left:2.6000000000000227px;transform:scaleX(0.85);transform-origin:left 50%;-webkit-text-stroke:0.25px currentColor;">Einkauf</div>
<div class="t" style="top:136.51px;font-size:9.2px;line-height:9.2px;color:#1c1c78;left:2.6000000000000227px;transform:scaleX(0.85);transform-origin:left 50%;-webkit-text-stroke:0.25px currentColor;">Einkauf</div>
<div class="t" style="top:149.90px;font-size:9.2px;line-height:9.2px;color:#1c1c78;left:2.6000000000000227px;transform:scaleX(0.85);transform-origin:left 50%;-webkit-text-stroke:0.25px currentColor;">Einkauf</div>
<div class="t" style="top:163.29px;font-size:9.2px;line-height:9.2px;color:#222222;left:2.6000000000000227px;transform:scaleX(0.85);transform-origin:left 50%;-webkit-text-stroke:0.25px currentColor;">Einkauf</div>
<div class="t" style="top:176.68px;font-size:9.2px;line-height:9.2px;color:#7c1c1c;left:2.6000000000000227px;transform:scaleX(0.85);transform-origin:left 50%;-webkit-text-stroke:0.25px currentColor;">Fertigung</div>
<div class="t" style="top:190.07px;font-size:9.2px;line-height:9.2px;color:#7c1c1c;left:2.6000000000000227px;transform:scaleX(0.85);transform-origin:left 50%;-webkit-text-stroke:0.25px currentColor;">Fertigung</div>
<div class="t" style="top:203.46px;font-size:9.2px;line-height:9.2px;color:#1c1c78;left:2.6000000000000227px;transform:scaleX(0.85);transform-origin:left 50%;-webkit-text-stroke:0.25px currentColor;">Einkauf</div>
<div class="t" style="top:216.85px;font-size:9.2px;line-height:9.2px;color:#e040e0;left:2.6000000000000227px;transform:scaleX(0.85);transform-origin:left 50%;-webkit-text-stroke:0.25px currentColor;">Einkauf</div>
<div class="t" style="top:230.24px;font-size:9.2px;line-height:9.2px;color:#7c1c1c;left:2.6000000000000227px;transform:scaleX(0.85);transform-origin:left 50%;-webkit-text-stroke:0.25px currentColor;">Fertigung</div>
<div class="t" style="top:243.63px;font-size:9.2px;line-height:9.2px;color:#e040e0;left:2.6000000000000227px;transform:scaleX(0.85);transform-origin:left 50%;-webkit-text-stroke:0.25px currentColor;">Fremdfertigung</div>
<div class="t" style="top:257.02px;font-size:9.2px;line-height:9.2px;color:#1c1c78;left:2.6000000000000227px;transform:scaleX(0.85);transform-origin:left 50%;-webkit-text-stroke:0.25px currentColor;">Einkauf</div>
<div class="t" style="top:270.41px;font-size:9.2px;line-height:9.2px;color:#1c1c78;left:2.6000000000000227px;transform:scaleX(0.85);transform-origin:left 50%;-webkit-text-stroke:0.25px currentColor;">Einkauf</div>
<div class="t" style="top:283.80px;font-size:9.2px;line-height:9.2px;color:#1c1c78;left:2.6000000000000227px;transform:scaleX(0.85);transform-origin:left 50%;-webkit-text-stroke:0.25px currentColor;">Einkauf</div>
<div class="t" style="top:297.19px;font-size:9.2px;line-height:9.2px;color:#7c1c1c;left:2.6000000000000227px;transform:scaleX(0.85);transform-origin:left 50%;-webkit-text-stroke:0.25px currentColor;">Fertigung</div>
</div>
<div class="a" style="left:1016px;top:332px;width:53px;height:309px;overflow:hidden">
<div class="t" style="top:2.61px;font-size:9.2px;line-height:9.2px;color:#7c1c1c;left:-9.90px;width:60px;text-align:right;transform:scaleX(0.85);transform-origin:right 50%;-webkit-text-stroke:0.25px currentColor;">1</div>
<div class="t" style="top:16.00px;font-size:9.2px;line-height:9.2px;color:#7c1c1c;left:-9.90px;width:60px;text-align:right;transform:scaleX(0.85);transform-origin:right 50%;-webkit-text-stroke:0.25px currentColor;">1</div>
<div class="t" style="top:29.39px;font-size:9.2px;line-height:9.2px;color:#7c1c1c;left:-9.90px;width:60px;text-align:right;transform:scaleX(0.85);transform-origin:right 50%;-webkit-text-stroke:0.25px currentColor;">1</div>
<div class="t" style="top:42.78px;font-size:9.2px;line-height:9.2px;color:#7c1c1c;left:-9.90px;width:60px;text-align:right;transform:scaleX(0.85);transform-origin:right 50%;-webkit-text-stroke:0.25px currentColor;">1</div>
<div class="t" style="top:56.17px;font-size:9.2px;line-height:9.2px;color:#7c1c1c;left:-9.90px;width:60px;text-align:right;transform:scaleX(0.85);transform-origin:right 50%;-webkit-text-stroke:0.25px currentColor;">1</div>
<div class="t" style="top:69.56px;font-size:9.2px;line-height:9.2px;color:#7c1c1c;left:-9.90px;width:60px;text-align:right;transform:scaleX(0.85);transform-origin:right 50%;-webkit-text-stroke:0.25px currentColor;">1</div>
<div class="t" style="top:82.95px;font-size:9.2px;line-height:9.2px;color:#1c1c78;left:-9.90px;width:60px;text-align:right;transform:scaleX(0.85);transform-origin:right 50%;-webkit-text-stroke:0.25px currentColor;">1</div>
<div class="t" style="top:96.34px;font-size:9.2px;line-height:9.2px;color:#1c1c78;left:-9.90px;width:60px;text-align:right;transform:scaleX(0.85);transform-origin:right 50%;-webkit-text-stroke:0.25px currentColor;">1</div>
<div class="t" style="top:109.73px;font-size:9.2px;line-height:9.2px;color:#1c1c78;left:-9.90px;width:60px;text-align:right;transform:scaleX(0.85);transform-origin:right 50%;-webkit-text-stroke:0.25px currentColor;">1</div>
<div class="t" style="top:123.12px;font-size:9.2px;line-height:9.2px;color:#1c1c78;left:-9.90px;width:60px;text-align:right;transform:scaleX(0.85);transform-origin:right 50%;-webkit-text-stroke:0.25px currentColor;">100</div>
<div class="t" style="top:136.51px;font-size:9.2px;line-height:9.2px;color:#1c1c78;left:-9.90px;width:60px;text-align:right;transform:scaleX(0.85);transform-origin:right 50%;-webkit-text-stroke:0.25px currentColor;">100</div>
<div class="t" style="top:149.90px;font-size:9.2px;line-height:9.2px;color:#1c1c78;left:-9.90px;width:60px;text-align:right;transform:scaleX(0.85);transform-origin:right 50%;-webkit-text-stroke:0.25px currentColor;">100</div>
<div class="t" style="top:163.29px;font-size:9.2px;line-height:9.2px;color:#222222;left:-9.90px;width:60px;text-align:right;transform:scaleX(0.85);transform-origin:right 50%;-webkit-text-stroke:0.25px currentColor;">1</div>
<div class="t" style="top:176.68px;font-size:9.2px;line-height:9.2px;color:#7c1c1c;left:-9.90px;width:60px;text-align:right;transform:scaleX(0.85);transform-origin:right 50%;-webkit-text-stroke:0.25px currentColor;">1</div>
<div class="t" style="top:190.07px;font-size:9.2px;line-height:9.2px;color:#7c1c1c;left:-9.90px;width:60px;text-align:right;transform:scaleX(0.85);transform-origin:right 50%;-webkit-text-stroke:0.25px currentColor;">1</div>
<div class="t" style="top:203.46px;font-size:9.2px;line-height:9.2px;color:#1c1c78;left:-9.90px;width:60px;text-align:right;transform:scaleX(0.85);transform-origin:right 50%;-webkit-text-stroke:0.25px currentColor;">1</div>
<div class="t" style="top:216.85px;font-size:9.2px;line-height:9.2px;color:#e040e0;left:-9.90px;width:60px;text-align:right;transform:scaleX(0.85);transform-origin:right 50%;-webkit-text-stroke:0.25px currentColor;">1</div>
<div class="t" style="top:230.24px;font-size:9.2px;line-height:9.2px;color:#7c1c1c;left:-9.90px;width:60px;text-align:right;transform:scaleX(0.85);transform-origin:right 50%;-webkit-text-stroke:0.25px currentColor;">1</div>
<div class="t" style="top:243.63px;font-size:9.2px;line-height:9.2px;color:#e040e0;left:-9.90px;width:60px;text-align:right;transform:scaleX(0.85);transform-origin:right 50%;-webkit-text-stroke:0.25px currentColor;">1</div>
<div class="t" style="top:257.02px;font-size:9.2px;line-height:9.2px;color:#1c1c78;left:-9.90px;width:60px;text-align:right;transform:scaleX(0.85);transform-origin:right 50%;-webkit-text-stroke:0.25px currentColor;">1</div>
<div class="t" style="top:270.41px;font-size:9.2px;line-height:9.2px;color:#1c1c78;left:-9.90px;width:60px;text-align:right;transform:scaleX(0.85);transform-origin:right 50%;-webkit-text-stroke:0.25px currentColor;">1</div>
<div class="t" style="top:283.80px;font-size:9.2px;line-height:9.2px;color:#1c1c78;left:-9.90px;width:60px;text-align:right;transform:scaleX(0.85);transform-origin:right 50%;-webkit-text-stroke:0.25px currentColor;">1</div>
<div class="t" style="top:297.19px;font-size:9.2px;line-height:9.2px;color:#7c1c1c;left:-9.90px;width:60px;text-align:right;transform:scaleX(0.85);transform-origin:right 50%;-webkit-text-stroke:0.25px currentColor;">1</div>
</div>
<div class="a" style="left:1070px;top:332px;width:83px;height:309px;overflow:hidden">
<div class="t" style="top:2.61px;font-size:9.2px;line-height:9.2px;color:#7c1c1c;left:2.3999999999998636px;transform:scaleX(0.85);transform-origin:left 50%;-webkit-text-stroke:0.25px currentColor;">KEIN LIEFERANT</div>
<div class="t" style="top:16.00px;font-size:9.2px;line-height:9.2px;color:#7c1c1c;left:2.3999999999998636px;transform:scaleX(0.85);transform-origin:left 50%;-webkit-text-stroke:0.25px currentColor;">KEIN LIEFERANT</div>
<div class="t" style="top:29.39px;font-size:9.2px;line-height:9.2px;color:#7c1c1c;left:2.3999999999998636px;transform:scaleX(0.85);transform-origin:left 50%;-webkit-text-stroke:0.25px currentColor;">KEIN LIEFERANT</div>
<div class="t" style="top:42.78px;font-size:9.2px;line-height:9.2px;color:#7c1c1c;left:2.3999999999998636px;transform:scaleX(0.85);transform-origin:left 50%;-webkit-text-stroke:0.25px currentColor;">KEIN LIEFERANT</div>
<div class="t" style="top:56.17px;font-size:9.2px;line-height:9.2px;color:#7c1c1c;left:2.3999999999998636px;transform:scaleX(0.85);transform-origin:left 50%;-webkit-text-stroke:0.25px currentColor;">KEIN LIEFERANT</div>
<div class="t" style="top:69.56px;font-size:9.2px;line-height:9.2px;color:#7c1c1c;left:2.3999999999998636px;transform:scaleX(0.85);transform-origin:left 50%;-webkit-text-stroke:0.25px currentColor;">KEIN LIEFERANT</div>
<div class="t" style="top:82.95px;font-size:9.2px;line-height:9.2px;color:#1c1c78;left:2.3999999999998636px;transform:scaleX(0.85);transform-origin:left 50%;-webkit-text-stroke:0.25px currentColor;">Dresden GmbH (L1000</div>
<div class="t" style="top:96.34px;font-size:9.2px;line-height:9.2px;color:#1c1c78;left:2.3999999999998636px;transform:scaleX(0.85);transform-origin:left 50%;-webkit-text-stroke:0.25px currentColor;">Dresden GmbH (L1000</div>
<div class="t" style="top:109.73px;font-size:9.2px;line-height:9.2px;color:#1c1c78;left:2.3999999999998636px;transform:scaleX(0.85);transform-origin:left 50%;-webkit-text-stroke:0.25px currentColor;">Dresden GmbH (L1000</div>
<div class="t" style="top:123.12px;font-size:9.2px;line-height:9.2px;color:#1c1c78;left:2.3999999999998636px;transform:scaleX(0.85);transform-origin:left 50%;-webkit-text-stroke:0.25px currentColor;">Normteile&amp;KT GmbH (L</div>
<div class="t" style="top:136.51px;font-size:9.2px;line-height:9.2px;color:#1c1c78;left:2.3999999999998636px;transform:scaleX(0.85);transform-origin:left 50%;-webkit-text-stroke:0.25px currentColor;">Normteile&amp;KT GmbH (L</div>
<div class="t" style="top:149.90px;font-size:9.2px;line-height:9.2px;color:#1c1c78;left:2.3999999999998636px;transform:scaleX(0.85);transform-origin:left 50%;-webkit-text-stroke:0.25px currentColor;">Normteile&amp;KT GmbH (L</div>
<div class="t" style="top:163.29px;font-size:9.2px;line-height:9.2px;color:#222222;left:2.3999999999998636px;transform:scaleX(0.85);transform-origin:left 50%;-webkit-text-stroke:0.25px currentColor;">Dresden GmbH (L1000</div>
<div class="t" style="top:176.68px;font-size:9.2px;line-height:9.2px;color:#7c1c1c;left:2.3999999999998636px;transform:scaleX(0.85);transform-origin:left 50%;-webkit-text-stroke:0.25px currentColor;">KEIN LIEFERANT</div>
<div class="t" style="top:190.07px;font-size:9.2px;line-height:9.2px;color:#7c1c1c;left:2.3999999999998636px;transform:scaleX(0.85);transform-origin:left 50%;-webkit-text-stroke:0.25px currentColor;">KEIN LIEFERANT</div>
<div class="t" style="top:203.46px;font-size:9.2px;line-height:9.2px;color:#1c1c78;left:2.3999999999998636px;transform:scaleX(0.85);transform-origin:left 50%;-webkit-text-stroke:0.25px currentColor;">Dresden GmbH (L1000</div>
<div class="t" style="top:216.85px;font-size:9.2px;line-height:9.2px;color:#e040e0;left:2.3999999999998636px;transform:scaleX(0.85);transform-origin:left 50%;-webkit-text-stroke:0.25px currentColor;">Dresden GmbH (L1000</div>
<div class="t" style="top:230.24px;font-size:9.2px;line-height:9.2px;color:#7c1c1c;left:2.3999999999998636px;transform:scaleX(0.85);transform-origin:left 50%;-webkit-text-stroke:0.25px currentColor;">KEIN LIEFERANT</div>
<div class="t" style="top:243.63px;font-size:9.2px;line-height:9.2px;color:#e040e0;left:2.3999999999998636px;transform:scaleX(0.85);transform-origin:left 50%;-webkit-text-stroke:0.25px currentColor;">LO-Oberflächenbeschichtung</div>
<div class="t" style="top:257.02px;font-size:9.2px;line-height:9.2px;color:#1c1c78;left:2.3999999999998636px;transform:scaleX(0.85);transform-origin:left 50%;-webkit-text-stroke:0.25px currentColor;">Dresden GmbH (L1000</div>
<div class="t" style="top:270.41px;font-size:9.2px;line-height:9.2px;color:#1c1c78;left:2.3999999999998636px;transform:scaleX(0.85);transform-origin:left 50%;-webkit-text-stroke:0.25px currentColor;">Dresden GmbH (L1000</div>
<div class="t" style="top:283.80px;font-size:9.2px;line-height:9.2px;color:#1c1c78;left:2.3999999999998636px;transform:scaleX(0.85);transform-origin:left 50%;-webkit-text-stroke:0.25px currentColor;">Dresden GmbH (L1000</div>
<div class="t" style="top:297.19px;font-size:9.2px;line-height:9.2px;color:#7c1c1c;left:2.3999999999998636px;transform:scaleX(0.85);transform-origin:left 50%;-webkit-text-stroke:0.25px currentColor;">KEIN LIEFERANT</div>
</div>
<svg class="a" style="left:177.5px;top:333.7px" width="9" height="9" viewBox="0 0 9 9"><circle cx="4.5" cy="4.5" r="3.6" fill="url(#gg)" stroke="#6a7a88" stroke-width="0.6"/></svg>
<svg class="a" style="left:177.5px;top:347.09px" width="9" height="9" viewBox="0 0 9 9"><circle cx="4.5" cy="4.5" r="3.6" fill="url(#gy)" stroke="#b8a010" stroke-width="0.6"/></svg>
<svg class="a" style="left:177.5px;top:360.48px" width="9" height="9" viewBox="0 0 9 9"><circle cx="4.5" cy="4.5" r="3.6" fill="url(#gy)" stroke="#b8a010" stroke-width="0.6"/></svg>
<svg class="a" style="left:177.5px;top:373.87px" width="9" height="9" viewBox="0 0 9 9"><circle cx="4.5" cy="4.5" r="3.6" fill="url(#gg)" stroke="#6a7a88" stroke-width="0.6"/></svg>
<svg class="a" style="left:177.5px;top:387.26px" width="9" height="9" viewBox="0 0 9 9"><circle cx="4.5" cy="4.5" r="3.6" fill="url(#gy)" stroke="#b8a010" stroke-width="0.6"/></svg>
<svg class="a" style="left:177.5px;top:400.65px" width="9" height="9" viewBox="0 0 9 9"><circle cx="4.5" cy="4.5" r="3.6" fill="url(#gy)" stroke="#b8a010" stroke-width="0.6"/></svg>
<svg class="a" style="left:177.5px;top:414.03999999999996px" width="9" height="9" viewBox="0 0 9 9"><circle cx="4.5" cy="4.5" r="3.6" fill="url(#gg)" stroke="#6a7a88" stroke-width="0.6"/></svg>
<svg class="a" style="left:177.5px;top:427.43px" width="9" height="9" viewBox="0 0 9 9"><circle cx="4.5" cy="4.5" r="3.6" fill="url(#gg)" stroke="#6a7a88" stroke-width="0.6"/></svg>
<svg class="a" style="left:177.5px;top:440.82px" width="9" height="9" viewBox="0 0 9 9"><circle cx="4.5" cy="4.5" r="3.6" fill="url(#gg)" stroke="#6a7a88" stroke-width="0.6"/></svg>
<svg class="a" style="left:177.5px;top:454.21px" width="9" height="9" viewBox="0 0 9 9"><circle cx="4.5" cy="4.5" r="3.6" fill="url(#gy)" stroke="#b8a010" stroke-width="0.6"/></svg>
<svg class="a" style="left:177.5px;top:467.6px" width="9" height="9" viewBox="0 0 9 9"><circle cx="4.5" cy="4.5" r="3.6" fill="url(#gy)" stroke="#b8a010" stroke-width="0.6"/></svg>
<svg class="a" style="left:177.5px;top:480.99px" width="9" height="9" viewBox="0 0 9 9"><circle cx="4.5" cy="4.5" r="3.6" fill="url(#gy)" stroke="#b8a010" stroke-width="0.6"/></svg>
<svg class="a" style="left:177.5px;top:494.38px" width="9" height="9" viewBox="0 0 9 9"><circle cx="4.5" cy="4.5" r="3.6" fill="url(#gg)" stroke="#6a7a88" stroke-width="0.6"/></svg>
<svg class="a" style="left:177.5px;top:507.77px" width="9" height="9" viewBox="0 0 9 9"><circle cx="4.5" cy="4.5" r="3.6" fill="url(#gy)" stroke="#b8a010" stroke-width="0.6"/></svg>
<svg class="a" style="left:177.5px;top:521.16px" width="9" height="9" viewBox="0 0 9 9"><circle cx="4.5" cy="4.5" r="3.6" fill="url(#gy)" stroke="#b8a010" stroke-width="0.6"/></svg>
<svg class="a" style="left:177.5px;top:534.55px" width="9" height="9" viewBox="0 0 9 9"><circle cx="4.5" cy="4.5" r="3.6" fill="url(#gy)" stroke="#b8a010" stroke-width="0.6"/></svg>
<svg class="a" style="left:177.5px;top:547.94px" width="9" height="9" viewBox="0 0 9 9"><circle cx="4.5" cy="4.5" r="3.6" fill="url(#gr)" stroke="#a01818" stroke-width="0.6"/></svg>
<svg class="a" style="left:177.5px;top:561.3299999999999px" width="9" height="9" viewBox="0 0 9 9"><circle cx="4.5" cy="4.5" r="3.6" fill="url(#gy)" stroke="#b8a010" stroke-width="0.6"/></svg>
<svg class="a" style="left:177.5px;top:574.72px" width="9" height="9" viewBox="0 0 9 9"><circle cx="4.5" cy="4.5" r="3.6" fill="url(#gr)" stroke="#a01818" stroke-width="0.6"/></svg>
<svg class="a" style="left:177.5px;top:588.11px" width="9" height="9" viewBox="0 0 9 9"><circle cx="4.5" cy="4.5" r="3.6" fill="url(#gy)" stroke="#b8a010" stroke-width="0.6"/></svg>
<svg class="a" style="left:177.5px;top:601.5px" width="9" height="9" viewBox="0 0 9 9"><circle cx="4.5" cy="4.5" r="3.6" fill="url(#gy)" stroke="#b8a010" stroke-width="0.6"/></svg>
<svg class="a" style="left:177.5px;top:614.89px" width="9" height="9" viewBox="0 0 9 9"><circle cx="4.5" cy="4.5" r="3.6" fill="url(#gy)" stroke="#b8a010" stroke-width="0.6"/></svg>
<svg class="a" style="left:177.5px;top:628.28px" width="9" height="9" viewBox="0 0 9 9"><circle cx="4.5" cy="4.5" r="3.6" fill="url(#gy)" stroke="#b8a010" stroke-width="0.6"/></svg>
<div class="a" style="left:160px;top:685px;width:1037px;height:17px;background:#eeeef2"></div>
<div class="a" style="left:160px;top:685px;width:1037px;height:1px;background:#d8d8dc"></div>
<div class="t" style="top:688.70px;font-size:9.8px;line-height:9.8px;color:#111;left:162.5px;transform:scaleX(0.89);transform-origin:left 50%;">Einschränkung zum Füllen der Tabelle (Lieferant).</div>
<div class="a" style="left:1126px;top:687px;width:15px;height:12px;border:1px solid #d8d8dc;box-sizing:border-box;"></div>
<div class="a" style="left:1141px;top:687px;width:26px;height:12px;border:1px solid #d8d8dc;box-sizing:border-box;"></div>
<div class="a" style="left:1141px;top:687px;width:26px;height:1px;background:#9a9a9e"></div>
<div class="a" style="left:1141px;top:687px;width:1px;height:12px;background:#9a9a9e"></div>
<div class="t" style="top:689.38px;font-size:9.0px;line-height:9.0px;color:#111;left:1139.00px;width:30px;text-align:center;transform:scaleX(0.95);transform-origin:center 50%;">NUM</div>
<div class="a" style="left:1169px;top:687px;width:14px;height:12px;border:1px solid #d8d8dc;box-sizing:border-box;"></div>
</body></html>
